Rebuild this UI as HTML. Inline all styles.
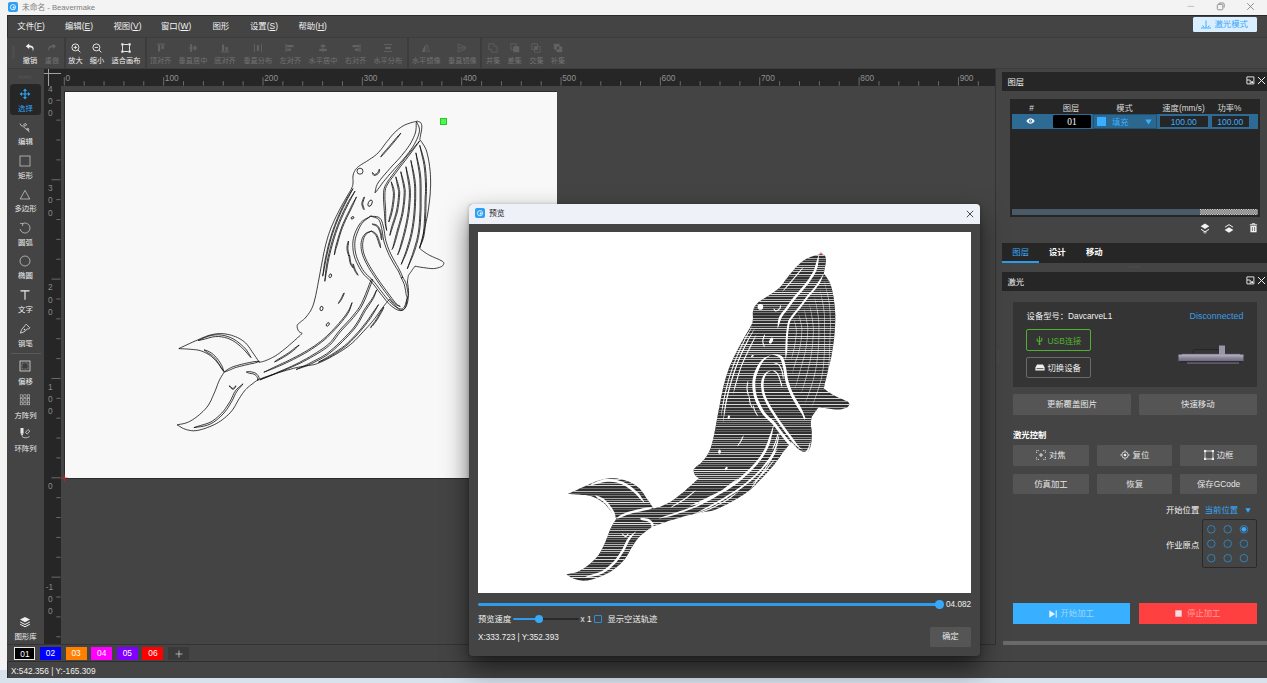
<!DOCTYPE html><html lang="zh"><head><meta charset="utf-8"><title>未命名 - Beavermake</title><style>
*{box-sizing:border-box;margin:0;padding:0}
html,body{width:1267px;height:683px;overflow:hidden;background:#f3f3f3;font-family:"Liberation Sans","Noto Sans CJK SC",sans-serif;}
.a{position:absolute}
.t{position:absolute;white-space:nowrap;line-height:1;color:#e8e8e8}
.c{text-align:center}
#win{position:absolute;left:7px;top:15px;width:1260px;height:662.600px;background:#444}
.tg{position:absolute;top:37.6px;height:30.6px;background:#464646}
.tl{position:absolute;top:57px;font-size:7.2px;line-height:8px;white-space:nowrap;text-align:center;color:#f0f0f0;transform:translateX(-50%)}
.tl.d{color:#727272}
.lt{position:absolute;left:7px;width:37px;text-align:center;font-size:7.4px;line-height:8px;color:#eee;white-space:nowrap}
.btn{position:absolute;background:#555;color:#e6e6e6;font-size:8.4px;line-height:1;display:flex;align-items:center;justify-content:center;white-space:nowrap;border-radius:1px}
svg{position:absolute;overflow:visible}
</style></head><body><div class="a" style="left:0;top:0;width:1267px;height:15px;background:#f3f3f3"></div><div class="a" style="left:8px;top:2px;width:10px;height:10px;border-radius:2px;background:#2da0f5"></div><svg style="left:8px;top:2px" width="10" height="10" viewBox="0 0 10 10"><circle cx="5" cy="5.2" r="2.6" fill="none" stroke="#d8eeff" stroke-width="1"/><circle cx="5.6" cy="5.6" r="1" fill="#fff"/></svg><div class="t" style="left:22px;top:3.5px;font-size:7.7px;color:#7c7c7c">未命名 - Beavermake</div><svg style="left:1180px;top:0" width="87" height="15" viewBox="0 0 87 15"><path d="M7.6 6.4h6.6" stroke="#b5b5b5" stroke-width="0.8" fill="none"/><rect x="37.3" y="4.4" width="5.6" height="5.4" rx="1.2" fill="none" stroke="#777" stroke-width="0.8"/><path d="M38.6 4.2c0-.8.5-1.2 1.2-1.2h3.2c.8 0 1.2.5 1.2 1.2v3.3" fill="none" stroke="#777" stroke-width="0.8"/><path d="M67.2 3.2l6.6 6.6M73.8 3.2l-6.6 6.6" stroke="#777" stroke-width="0.8" fill="none"/></svg><div class="a" style="left:0;top:677px;width:1267px;height:6px;background:#d8e2ed"></div><div class="a" style="left:0;top:0;width:7px;height:670px;background:#f3f3f3"></div><div class="a" style="left:0;top:670px;width:7px;height:13px;background:#d8e2ed"></div><div id="win"></div><div class="a" style="left:6.5px;top:14.5px;width:1261px;height:1px;background:#2a2a2a"></div><div class="a" style="left:6.5px;top:15px;width:1px;height:663px;background:#2e2e2e"></div><div class="t" style="left:17.3px;top:22.4px;font-size:8.4px;color:#f2f2f2">文件(<u>F</u>)</div><div class="t" style="left:65px;top:22.4px;font-size:8.4px;color:#f2f2f2">编辑(<u>E</u>)</div><div class="t" style="left:113.5px;top:22.4px;font-size:8.4px;color:#f2f2f2">视图(<u>V</u>)</div><div class="t" style="left:161px;top:22.4px;font-size:8.4px;color:#f2f2f2">窗口(<u>W</u>)</div><div class="t" style="left:212.5px;top:22.4px;font-size:8.4px;color:#f2f2f2">图形</div><div class="t" style="left:250px;top:22.4px;font-size:8.4px;color:#f2f2f2">设置(<u>S</u>)</div><div class="t" style="left:298.5px;top:22.4px;font-size:8.4px;color:#f2f2f2">帮助(<u>H</u>)</div><div class="a" style="left:1193.3px;top:17px;width:63.3px;height:14.6px;background:#d9eeff;border-radius:1.5px"></div><svg style="left:1200px;top:19.5px" width="12" height="9" viewBox="0 0 12 9"><path d="M6 0.5v7.3M1 8h10M2.4 5.6l1.8 1.4M9.6 5.6l-1.8 1.4" stroke="#3ba5f5" stroke-width="0.9" fill="none"/></svg><div class="t" style="left:1214.5px;top:20.4px;font-size:8.4px;color:#3ba5f5">激光模式</div><div class="a" style="left:7px;top:37px;width:1260px;height:32px;background:#3c3c3c"></div><div class="tg" style="left:7px;width:56.6px"></div><div class="tg" style="left:65.6px;width:79px"></div><div class="tg" style="left:146.6px;width:260.4px"></div><div class="tg" style="left:409px;width:71px"></div><div class="tg" style="left:482px;width:785px"></div><svg style="left:11px;top:45px" width="6" height="16" viewBox="0 0 6 16"><path d="M1 1l3 2.5-3 2.5 3 2.5-3 2.5 3 2.5M4 1l-3 2.5 3 2.5-3 2.5 3 2.5-3 2.5" stroke="#5a5a5a" stroke-width="0.5" fill="none"/></svg><svg style="left:25px;top:43px" width="10" height="9" viewBox="0 0 10 9"><path d="M4.2 0.6L0.8 3.3l3.4 2.7V4.3c2.6-.2 4 1.2 3.6 4.2 1.8-2.7.9-6-3.6-6.2z" fill="#f2f2f2"/></svg><div class="tl" style="left:30px">撤销</div><svg style="left:47px;top:43px" width="10" height="9" viewBox="0 0 10 9"><path d="M5.8 0.6L9.2 3.3 5.8 6V4.3c-2.6-.2-4 1.2-3.6 4.2-1.8-2.7-.9-6 3.6-6.2z" fill="#626262"/></svg><div class="tl d" style="left:52px">重做</div><svg style="left:70.5px;top:42.7px" width="10" height="10" viewBox="0 0 10 10"><circle cx="4.4" cy="4.4" r="3.5" fill="none" stroke="#f2f2f2" stroke-width="0.9"/><path d="M7 7l2.4 2.4M2.7 4.4h3.4M4.4 2.7v3.4" stroke="#f2f2f2" stroke-width="0.9" fill="none"/></svg><div class="tl" style="left:75.5px">放大</div><svg style="left:92px;top:42.7px" width="10" height="10" viewBox="0 0 10 10"><circle cx="4.4" cy="4.4" r="3.5" fill="none" stroke="#f2f2f2" stroke-width="0.9"/><path d="M7 7l2.4 2.4M2.7 4.4h3.4" stroke="#f2f2f2" stroke-width="0.9" fill="none"/></svg><div class="tl" style="left:97px">缩小</div><svg style="left:121px;top:42.5px" width="10" height="10" viewBox="0 0 10 10"><rect x="1.5" y="1.5" width="7" height="7" fill="none" stroke="#f2f2f2" stroke-width="0.9"/><g fill="#f2f2f2"><rect x="0.3" y="0.3" width="2.4" height="2.4"/><rect x="7.3" y="0.3" width="2.4" height="2.4"/><rect x="0.3" y="7.3" width="2.4" height="2.4"/><rect x="7.3" y="7.3" width="2.4" height="2.4"/></g><rect x="2.7" y="0" width="4.6" height="10" fill="#464646"/><rect x="0" y="2.7" width="10" height="4.6" fill="#464646"/><path d="M1.5 2.7v4.6M8.5 2.7v4.6M2.7 1.5h4.6M2.7 8.5h4.6" stroke="#f2f2f2" stroke-width="0.9"/></svg><div class="tl" style="left:126px">适合画布</div><svg style="left:155.5px;top:42.7px" width="10" height="10" viewBox="0 0 10 10"><path d="M1 1h8" stroke="#626262" stroke-width="1"/><rect x="2" y="2" width="2.2" height="6.5" fill="#626262"/><rect x="5.6" y="2" width="2.2" height="4" fill="#626262"/></svg><div class="tl d" style="left:160.5px">顶对齐</div><svg style="left:188px;top:42.7px" width="10" height="10" viewBox="0 0 10 10"><path d="M0.5 5h9" stroke="#626262" stroke-width="0.8"/><rect x="2" y="1.2" width="2.2" height="7.6" fill="#626262"/><rect x="5.8" y="2.8" width="2.2" height="4.4" fill="#626262"/></svg><div class="tl d" style="left:193px">垂直居中</div><svg style="left:220px;top:42.7px" width="10" height="10" viewBox="0 0 10 10"><path d="M1 9h8" stroke="#626262" stroke-width="1"/><rect x="2" y="1.5" width="2.2" height="6.5" fill="#626262"/><rect x="5.6" y="4" width="2.2" height="4" fill="#626262"/></svg><div class="tl d" style="left:225px">底对齐</div><svg style="left:252.8px;top:42.7px" width="10" height="10" viewBox="0 0 10 10"><path d="M1.5 1v8M8.5 1v8" stroke="#626262" stroke-width="0.9"/><rect x="3.8" y="2.2" width="2.4" height="5.6" fill="#626262"/></svg><div class="tl d" style="left:257.8px">垂直分布</div><svg style="left:285.4px;top:42.7px" width="10" height="10" viewBox="0 0 10 10"><path d="M1 1v8" stroke="#626262" stroke-width="1"/><rect x="2" y="2" width="6.5" height="2.2" fill="#626262"/><rect x="2" y="5.6" width="4" height="2.2" fill="#626262"/></svg><div class="tl d" style="left:290.4px">左对齐</div><svg style="left:318px;top:42.7px" width="10" height="10" viewBox="0 0 10 10"><path d="M5 0.5v9" stroke="#626262" stroke-width="0.8"/><rect x="2.8" y="2" width="4.4" height="2.2" fill="#626262"/><rect x="1.2" y="5.8" width="7.6" height="2.2" fill="#626262"/></svg><div class="tl d" style="left:323px">水平居中</div><svg style="left:350.5px;top:42.7px" width="10" height="10" viewBox="0 0 10 10"><path d="M9 1v8" stroke="#626262" stroke-width="1"/><rect x="1.5" y="2" width="6.5" height="2.2" fill="#626262"/><rect x="4" y="5.6" width="4" height="2.2" fill="#626262"/></svg><div class="tl d" style="left:355.5px">右对齐</div><svg style="left:382.8px;top:42.7px" width="10" height="10" viewBox="0 0 10 10"><path d="M1 1.5h8M1 8.5h8" stroke="#626262" stroke-width="0.9"/><rect x="2.2" y="3.8" width="5.6" height="2.4" fill="#626262"/></svg><div class="tl d" style="left:387.8px">水平分布</div><svg style="left:421.3px;top:42.7px" width="10" height="10" viewBox="0 0 10 10"><path d="M4.3 1v8H0.8z" fill="#626262"/><path d="M5.9 1.6v7h3z" fill="none" stroke="#626262" stroke-width="0.7"/></svg><div class="tl d" style="left:426.3px">水平镜像</div><svg style="left:457.4px;top:42.7px" width="10" height="10" viewBox="0 0 10 10"><path d="M1 4.3h8L1 0.8z" fill="none" stroke="#626262" stroke-width="0.7"/><path d="M1 5.9h8l-8 3z" fill="none" stroke="#626262" stroke-width="0.7"/></svg><div class="tl d" style="left:462.4px">垂直镜像</div><svg style="left:488.2px;top:42.7px" width="10" height="10" viewBox="0 0 10 10"><path d="M0.8 0.8h5.4v2.6h3v5.8H3.4V6.6H0.8z" fill="none" stroke="#626262" stroke-width="0.8"/></svg><div class="tl d" style="left:493.2px">并集</div><svg style="left:509.6px;top:42.7px" width="10" height="10" viewBox="0 0 10 10"><path d="M0.8 0.8h5.4v5.8H0.8z" fill="none" stroke="#626262" stroke-width="0.8"/><rect x="3.2" y="3.2" width="6" height="6" fill="#626262"/></svg><div class="tl d" style="left:514.6px">差集</div><svg style="left:531.4px;top:42.7px" width="10" height="10" viewBox="0 0 10 10"><path d="M0.8 0.8h5.8v5.8H0.8zM3.4 3.4h5.8v5.8H3.4z" fill="none" stroke="#626262" stroke-width="0.8"/><rect x="4" y="4" width="2.2" height="2.2" fill="#626262"/></svg><div class="tl d" style="left:536.4px">交集</div><svg style="left:553px;top:42.7px" width="10" height="10" viewBox="0 0 10 10"><rect x="0.8" y="0.8" width="5.8" height="5.8" fill="#626262"/><rect x="3.4" y="3.4" width="5.8" height="5.8" fill="#626262"/><rect x="3.8" y="3.8" width="2.4" height="2.4" fill="#464646"/></svg><div class="tl d" style="left:558px">补集</div><div class="a" style="left:7px;top:69px;width:37px;height:576px;background:#444"></div><svg style="left:18px;top:74.5px" width="14" height="4" viewBox="0 0 14 4"><path d="M0.5 0.5l2.5 3 2.5-3 2.5 3 2.5-3 2.5 3M0.5 3.5l2.5-3 2.5 3 2.5-3 2.5 3 2.5-3" stroke="#5a5a5a" stroke-width="0.5" fill="none"/></svg><div class="a" style="left:10px;top:84px;width:31px;height:31px;border-radius:3.5px;background:#262626"></div><svg style="left:19.3px;top:88px" width="12" height="12" viewBox="0 0 12 12"><path d="M6 0.6L3.9 3h1.5v2.4H3V3.9L0.6 6 3 8.1V6.6h2.4V9H3.9L6 11.4 8.1 9H6.6V6.6H9v1.5L11.4 6 9 3.9v1.5H6.6V3h1.5z" fill="#2ea3f2"/></svg><div class="lt" style="top:105.3px;color:#2ea3f2">选择</div><svg style="left:19.3px;top:122px" width="12" height="12" viewBox="0 0 12 12"><path d="M1 1.5l1.2 2.2M2.2 3.7c1.5.2 2.3.8 3.2 2 .8 1 1.800 1.600 3.300 1.700M8.700 7.400l1.5 2.8M4.600 2.600l2-1.2 1 1.600-2 1.200z" stroke="#e8e8e8" stroke-width="0.7" fill="none"/><circle cx="8.800" cy="7.300" r="1" fill="none" stroke="#e8e8e8" stroke-width="0.6"/></svg><div class="lt" style="top:138.2px;color:#eee">编辑</div><svg style="left:19.3px;top:154.8px" width="12" height="12" viewBox="0 0 12 12"><rect x="1" y="1" width="10" height="10" fill="none" stroke="#d4d4d4" stroke-width="0.7"/></svg><div class="lt" style="top:172px;color:#eee">矩形</div><svg style="left:19.3px;top:189px" width="12" height="12" viewBox="0 0 12 12"><path d="M6 1.3L10.8 10H1.2z" fill="none" stroke="#d4d4d4" stroke-width="0.7"/></svg><div class="lt" style="top:205.2px;color:#eee">多边形</div><svg style="left:19.3px;top:222px" width="12" height="12" viewBox="0 0 12 12"><path d="M3.2 1.900A5 5 0 1 1 1.100 7.000" fill="none" stroke="#d4d4d4" stroke-width="0.7"/><path d="M1.100 1.300l2.700 0.300-0.300 2.400" fill="none" stroke="#d4d4d4" stroke-width="0.7"/></svg><div class="lt" style="top:239px;color:#eee">圆弧</div><svg style="left:19.3px;top:255.3px" width="12" height="12" viewBox="0 0 12 12"><circle cx="6" cy="6" r="5" fill="none" stroke="#d4d4d4" stroke-width="0.7"/></svg><div class="lt" style="top:271.7px;color:#eee">椭圆</div><svg style="left:19.3px;top:288.8px" width="12" height="12" viewBox="0 0 12 12"><path d="M1.500 1.300h9v1.100h-3.950v8.400h-1.100v-8.400h-3.950z" fill="#f0f0f0"/></svg><div class="lt" style="top:306.3px;color:#eee">文字</div><svg style="left:19.3px;top:322.6px" width="12" height="12" viewBox="0 0 12 12"><path d="M7.200 1.200l3.600 3.600-1.300 1.300-0.600-0.600-3.900 3.400-3.600 1.200 1.200-3.600 3.400-3.900-0.100-0.100z" fill="none" stroke="#e8e8e8" stroke-width="0.8"/><circle cx="5.500" cy="6.500" r="0.800" fill="#e8e8e8"/></svg><div class="lt" style="top:339.5px;color:#eee">钢笔</div><div class="a" style="left:10.5px;top:352.5px;width:30px;height:0.7px;background:#5a5a5a"></div><svg style="left:19.3px;top:360px" width="12" height="12" viewBox="0 0 12 12"><rect x="1" y="1" width="10" height="10" fill="none" stroke="#e0e0e0" stroke-width="0.8"/><rect x="3" y="3" width="6" height="6" fill="#3c3c3c" stroke="#d0d0d0" stroke-width="0.5" stroke-dasharray="0.8 0.6"/></svg><div class="lt" style="top:377.7px;color:#eee">偏移</div><svg style="left:19.3px;top:394.4px" width="12" height="12" viewBox="0 0 12 12"><rect x="1.2" y="0.8" width="2.3" height="2.600" fill="none" stroke="#c4c4c4" stroke-width="0.6"/><rect x="1.2" y="4.5" width="2.3" height="2.600" fill="none" stroke="#c4c4c4" stroke-width="0.6"/><rect x="1.2" y="8.2" width="2.3" height="2.600" fill="none" stroke="#c4c4c4" stroke-width="0.6"/><rect x="4.8" y="0.8" width="2.3" height="2.600" fill="none" stroke="#c4c4c4" stroke-width="0.6"/><rect x="4.8" y="4.5" width="2.3" height="2.600" fill="none" stroke="#c4c4c4" stroke-width="0.6"/><rect x="4.8" y="8.2" width="2.3" height="2.600" fill="none" stroke="#c4c4c4" stroke-width="0.6"/><rect x="8.4" y="0.8" width="2.3" height="2.600" fill="none" stroke="#c4c4c4" stroke-width="0.6"/><rect x="8.4" y="4.5" width="2.3" height="2.600" fill="none" stroke="#c4c4c4" stroke-width="0.6"/><rect x="8.4" y="8.2" width="2.3" height="2.600" fill="none" stroke="#c4c4c4" stroke-width="0.6"/></svg><div class="lt" style="top:411.7px;color:#eee">方阵列</div><svg style="left:19.3px;top:427.3px" width="12" height="12" viewBox="0 0 12 12"><path d="M1.500 1h3v5.500h-3z" fill="#e8e8e8"/><path d="M1.500 6.500L3 9l1.500-2.500" fill="#e8e8e8"/><path d="M3 9.500c2 1.800 5 1.800 7.500 0M6.500 5.500l2.500-3 1.800 1.500-2.500 3z" stroke="#e8e8e8" stroke-width="0.7" fill="none"/></svg><div class="lt" style="top:444.5px;color:#eee">环阵列</div><svg style="left:19.3px;top:616px" width="12" height="12" viewBox="0 0 12 12"><path d="M6 1L11 3.600 6 6.200 1 3.600z" fill="#f0f0f0"/><path d="M1.200 6L6 8.500 10.800 6M1.200 8.300L6 10.800 10.800 8.300" fill="none" stroke="#f0f0f0" stroke-width="1"/></svg><div class="lt" style="top:632.7px;color:#eee">图形库</div><div class="a" style="left:44px;top:69px;width:952px;height:17px;background:#262626"></div><div class="a" style="left:44px;top:69px;width:17px;height:575.200px;background:#262626"></div><div class="a" style="left:48px;top:69px;width:0.7px;height:16.500px;background:#a0a0a0"></div><div class="a" style="left:44px;top:72.600px;width:16.500px;height:0.7px;background:#a0a0a0"></div><svg style="left:0;top:0" width="1267" height="683" viewBox="0 0 1267 683"><text x="65.50" y="81.100" font-size="8.3" fill="#909090" font-family='Liberation Sans, sans-serif'>0</text><text x="164.85" y="81.100" font-size="8.3" fill="#909090" font-family='Liberation Sans, sans-serif'>100</text><text x="264.20" y="81.100" font-size="8.3" fill="#909090" font-family='Liberation Sans, sans-serif'>200</text><text x="363.55" y="81.100" font-size="8.3" fill="#909090" font-family='Liberation Sans, sans-serif'>300</text><text x="462.90" y="81.100" font-size="8.3" fill="#909090" font-family='Liberation Sans, sans-serif'>400</text><text x="562.25" y="81.100" font-size="8.3" fill="#909090" font-family='Liberation Sans, sans-serif'>500</text><text x="661.60" y="81.100" font-size="8.3" fill="#909090" font-family='Liberation Sans, sans-serif'>600</text><text x="760.95" y="81.100" font-size="8.3" fill="#909090" font-family='Liberation Sans, sans-serif'>700</text><text x="860.30" y="81.100" font-size="8.3" fill="#909090" font-family='Liberation Sans, sans-serif'>800</text><text x="959.65" y="81.100" font-size="8.3" fill="#909090" font-family='Liberation Sans, sans-serif'>900</text><path d="M64.30 77.2V85.600M84.17 81.200V85.600M104.04 81.200V85.600M123.91 81.200V85.600M143.78 81.200V85.600M163.65 77.2V85.600M183.52 81.200V85.600M203.39 81.200V85.600M223.26 81.200V85.600M243.13 81.200V85.600M263.00 77.2V85.600M282.87 81.200V85.600M302.74 81.200V85.600M322.61 81.200V85.600M342.48 81.200V85.600M362.35 77.2V85.600M382.22 81.200V85.600M402.09 81.200V85.600M421.96 81.200V85.600M441.83 81.200V85.600M461.70 77.2V85.600M481.57 81.200V85.600M501.44 81.200V85.600M521.31 81.200V85.600M541.18 81.200V85.600M561.05 77.2V85.600M580.92 81.200V85.600M600.79 81.200V85.600M620.66 81.200V85.600M640.53 81.200V85.600M660.40 77.2V85.600M680.27 81.200V85.600M700.14 81.200V85.600M720.01 81.200V85.600M739.88 81.200V85.600M759.75 77.2V85.600M779.62 81.200V85.600M799.49 81.200V85.600M819.36 81.200V85.600M839.23 81.200V85.600M859.10 77.2V85.600M878.97 81.200V85.600M898.84 81.200V85.600M918.71 81.200V85.600M938.58 81.200V85.600M958.45 77.2V85.600M978.32 81.200V85.600M56.300 100.27H60.500M56.300 120.14H60.500M56.300 140.01H60.500M56.300 159.88H60.500M51.500 179.75H60.500M56.300 199.62H60.500M56.300 219.49H60.500M56.300 239.36H60.500M56.300 259.23H60.500M51.500 279.10H60.500M56.300 298.97H60.500M56.300 318.84H60.500M56.300 338.71H60.500M56.300 358.58H60.500M51.500 378.45H60.500M56.300 398.32H60.500M56.300 418.19H60.500M56.300 438.06H60.500M56.300 457.93H60.500M51.500 477.80H60.500M56.300 497.67H60.500M56.300 517.54H60.500M56.300 537.41H60.500M56.300 557.28H60.500M51.500 577.15H60.500M56.300 597.02H60.500M56.300 616.89H60.500M56.300 636.76H60.500" stroke="#9a9a9a" stroke-width="0.6" fill="none"/><text x="50.2" y="91.60" font-size="8.3" fill="#8a8a8a" text-anchor="middle" font-family="Liberation Sans, sans-serif">4</text><text x="50.2" y="103.90" font-size="8.3" fill="#8a8a8a" text-anchor="middle" font-family="Liberation Sans, sans-serif">0</text><text x="50.2" y="116.20" font-size="8.3" fill="#8a8a8a" text-anchor="middle" font-family="Liberation Sans, sans-serif">0</text><text x="50.2" y="190.95" font-size="8.3" fill="#8a8a8a" text-anchor="middle" font-family="Liberation Sans, sans-serif">3</text><text x="50.2" y="203.25" font-size="8.3" fill="#8a8a8a" text-anchor="middle" font-family="Liberation Sans, sans-serif">0</text><text x="50.2" y="215.55" font-size="8.3" fill="#8a8a8a" text-anchor="middle" font-family="Liberation Sans, sans-serif">0</text><text x="50.2" y="290.30" font-size="8.3" fill="#8a8a8a" text-anchor="middle" font-family="Liberation Sans, sans-serif">2</text><text x="50.2" y="302.60" font-size="8.3" fill="#8a8a8a" text-anchor="middle" font-family="Liberation Sans, sans-serif">0</text><text x="50.2" y="314.90" font-size="8.3" fill="#8a8a8a" text-anchor="middle" font-family="Liberation Sans, sans-serif">0</text><text x="50.2" y="389.65" font-size="8.3" fill="#8a8a8a" text-anchor="middle" font-family="Liberation Sans, sans-serif">1</text><text x="50.2" y="401.95" font-size="8.3" fill="#8a8a8a" text-anchor="middle" font-family="Liberation Sans, sans-serif">0</text><text x="50.2" y="414.25" font-size="8.3" fill="#8a8a8a" text-anchor="middle" font-family="Liberation Sans, sans-serif">0</text><text x="50.2" y="489.00" font-size="8.3" fill="#8a8a8a" text-anchor="middle" font-family="Liberation Sans, sans-serif">0</text><text x="49.5" y="589.85" font-size="8.3" fill="#8a8a8a" text-anchor="middle" font-family="Liberation Sans, sans-serif">-1</text><text x="50.2" y="602.15" font-size="8.3" fill="#8a8a8a" text-anchor="middle" font-family="Liberation Sans, sans-serif">0</text><text x="50.2" y="614.45" font-size="8.3" fill="#8a8a8a" text-anchor="middle" font-family="Liberation Sans, sans-serif">0</text></svg><div class="a" style="left:64.300px;top:91.300px;width:493px;height:387.500px;background:#2b2b2b"></div><div class="a" style="left:65px;top:92px;width:491.500px;height:386px;background:#f8f8f8"></div><svg style="left:60px;top:474px" width="9" height="9" viewBox="0 0 9 9"><path d="M4.300 0.500v7M0.800 4h7" stroke="#e02020" stroke-width="0.7"/></svg><div class="a" style="left:440px;top:117.800px;width:7px;height:7.200px;background:#4cf94c;border:0.8px solid #2cc42c"></div><svg style="left:0;top:0" width="1267" height="683" viewBox="0 0 1267 683"><g fill="none" stroke="#0a0a0a" stroke-width="0.78" stroke-linejoin="round"><path d="M417.5,121.2L418.1 121.5 418.8 121.7 419.4 121.9 420.0 122.2 420.6 122.5 421.0 123.0 421.3 123.6 421.5 124.4 421.7 125.2 421.8 126.1 421.8 127.1 421.8 128.0 421.7 128.9 421.6 129.9 421.4 131.0 421.2 132.0 421.0 133.0 420.8 134.0 420.6 134.9 420.5 135.9 420.3 136.8 420.1 137.7 420.0 138.6 419.8 139.5 420.3 140.2 420.9 140.9 421.4 141.6 421.9 142.3 422.4 143.1 423.0 144.0 423.6 145.0 424.2 145.9 424.8 147.0 425.4 148.1 426.0 149.5 426.5 151.0 427.0 152.8 427.5 154.8 428.0 156.9 428.5 159.2 428.9 161.6 429.3 164.0 429.6 166.5 429.9 169.0 430.2 171.7 430.4 174.4 430.5 177.2 430.6 180.0 430.6 182.9 430.6 185.9 430.4 188.9 430.3 191.9 430.1 195.0 429.8 198.0 429.5 201.0 429.1 204.0 428.7 207.1 428.3 210.1 427.8 213.1 427.3 216.0 426.7 218.9 426.1 221.8 425.5 224.7 424.8 227.5 424.1 230.3 423.5 233.0 422.9 235.7 422.2 238.3 421.6 240.8 421.0 243.4 420.3 245.9 419.7 248.5 420.6 249.2 421.4 249.9 422.3 250.5 423.2 251.2 424.1 251.9 425.0 252.5 425.9 253.1 426.8 253.7 427.7 254.2 428.7 254.8 429.8 255.4 431.0 256.0 432.5 256.7 434.3 257.5 436.2 258.3 438.1 259.1 439.7 259.8 441.0 260.5 441.9 261.0 442.7 261.5 443.2 261.9 443.5 262.3 443.7 262.7 443.8 263.2 443.8 263.7 443.6 264.3 443.3 264.9 442.9 265.5 442.3 266.0 441.5 266.5 440.5 267.0 439.4 267.4 438.0 267.8 436.6 268.2 435.1 268.4 433.6 268.6 432.0 268.6 430.3 268.5 428.6 268.3 426.8 268.1 425.1 267.8 423.5 267.6 422.0 267.4 420.5 267.2 419.1 266.9 417.8 266.7 416.4 266.4 415.0 266.2 414.4 267.0 413.8 267.8 413.2 268.6 412.6 269.4 412.1 270.2 411.5 271.0 411.0 271.8 410.4 272.5 409.9 273.3 409.4 274.0 408.9 274.8 408.4 275.5 408.2 276.6 408.0 277.6 407.8 278.6 407.7 279.7 407.5 280.8 407.5 282.0 407.6 283.3 407.8 284.6 408.0 286.0 408.2 287.5 408.4 289.0 408.5 290.5 408.5 292.1 408.5 293.8 408.4 295.6 408.3 297.3 408.1 299.0 407.9 300.5 407.6 301.9 407.3 303.2 406.9 304.5 406.5 305.6 406.0 306.6 405.5 307.5 404.9 308.3 404.2 308.9 403.4 309.5 402.6 309.9 401.8 310.1 401.0 310.2 400.3 310.1 399.6 309.7 398.9 309.3 398.2 308.6 397.4 307.9 396.5 307.0 395.5 306.0 394.4 304.7 393.2 303.4 391.9 302.0 390.7 300.6 389.5 299.2 388.5 300.4 387.5 301.5 386.6 302.6 385.6 303.8 384.5 305.2 383.2 306.8 381.7 308.8 380.1 311.0 378.4 313.5 376.6 316.0 374.8 318.4 373.1 320.6 371.4 322.6 369.8 324.5 368.2 326.3 366.5 328.1 364.8 330.0 363.0 331.9 361.1 334.0 359.1 336.1 357.1 338.3 355.0 340.4 352.8 342.5 350.5 344.5 348.2 346.3 345.7 348.1 343.2 349.8 340.6 351.4 338.0 353.0 335.3 354.6 332.4 356.2 329.4 357.9 326.2 359.5 323.2 361.0 320.3 362.3 317.7 363.4 315.5 364.2 313.5 364.7 311.8 365.0 310.1 365.3 308.4 365.5 306.7 365.8 305.0 366.1 303.5 366.3 301.9 366.5 300.3 366.8 298.4 367.2 296.1 367.7 293.3 368.4 290.2 369.3 286.7 370.2 283.2 371.3 279.7 372.3 276.4 373.3 273.3 374.3 270.2 375.3 267.2 376.4 264.2 377.4 261.2 378.5 258.2 379.5 257.4 380.1 256.6 380.7 255.8 381.2 255.0 381.8 254.1 382.5 253.1 383.3 252.0 384.2 250.7 385.1 249.4 386.1 248.1 387.2 246.8 388.4 245.6 389.6 244.5 390.9 243.5 392.2 242.5 393.6 241.5 395.1 240.4 396.7 239.3 398.4 238.2 400.3 237.0 402.4 235.8 404.6 234.6 406.8 233.2 409.0 231.7 411.0 230.0 412.9 228.3 414.7 226.4 416.4 224.4 418.1 222.4 419.7 220.4 421.1 218.4 422.4 216.3 423.6 214.2 424.7 212.0 425.7 209.9 426.6 207.8 427.4 205.7 428.2 203.5 428.9 201.3 429.5 199.2 430.1 197.2 430.5 195.2 430.7 193.3 430.8 191.6 430.7 189.9 430.4 188.2 430.1 186.6 429.7 185.1 429.2 183.6 428.6 182.3 428.0 181.0 427.2 179.7 426.4 178.4 425.6 177.1 424.9 178.9 424.5 180.6 424.2 182.4 423.9 184.1 423.5 185.9 423.0 187.6 422.4 189.3 421.6 191.0 420.7 192.7 419.7 194.3 418.6 196.0 417.4 197.7 416.1 199.4 414.7 201.2 413.1 203.0 411.4 204.7 409.7 206.3 407.9 207.8 406.0 209.1 404.0 210.2 402.0 211.3 399.9 212.2 397.7 213.2 395.5 214.1 393.4 215.0 391.3 215.9 389.1 216.7 386.9 217.5 384.7 218.3 382.7 219.1 380.8 219.9 379.1 220.8 377.6 221.6 376.2 222.5 374.8 223.3 373.4 224.2 372.0 223.2 370.5 222.1 369.0 221.1 367.5 220.1 366.0 219.0 364.6 217.9 363.2 216.7 361.8 215.6 360.5 214.3 359.2 213.1 357.9 211.7 356.7 210.3 355.6 208.8 354.6 207.1 353.6 205.4 352.7 203.7 351.9 201.9 351.2 200.2 350.6 198.5 350.2 196.9 349.9 195.3 349.7 193.6 349.6 191.9 349.4 190.2 349.3 188.4 349.1 186.5 349.0 184.6 348.9 182.7 348.8 180.7 348.7 178.8 348.6 181.5 347.3 184.3 346.0 187.1 344.7 189.8 343.4 192.5 342.2 195.2 341.0 197.8 339.9 200.4 338.7 203.0 337.6 205.5 336.6 207.9 335.7 210.3 335.0 212.5 334.5 214.7 334.1 216.8 333.8 218.8 333.6 220.8 333.6 222.9 333.7 225.0 333.9 227.2 334.3 229.4 334.7 231.5 335.3 233.5 336.0 235.5 336.7 237.4 337.5 239.1 338.4 240.9 339.4 242.5 340.5 244.1 341.7 245.6 343.0 247.0 344.5 248.3 346.1 249.6 347.9 250.8 349.7 251.9 351.4 253.1 353.1 254.2 354.7 255.3 356.3 256.3 357.8 257.3 359.3 258.4 360.9 259.4 362.4 260.4 362.1 261.4 361.9 262.3 361.7 263.3 361.4 264.4 361.1 265.7 360.6 267.2 360.0 268.8 359.3 270.5 358.5 272.3 357.6 274.1 356.6 275.8 355.6 277.5 354.5 279.2 353.3 280.9 352.0 282.5 350.7 284.2 349.4 285.9 348.0 287.6 346.6 289.4 345.0 291.2 343.5 292.9 342.0 294.5 340.5 296.0 339.2 297.3 338.1 298.4 337.0 299.3 336.1 300.3 335.2 301.2 334.3 302.2 333.4 301.6 333.0 300.9 332.7 300.2 332.3 299.6 332.0 299.0 331.5 298.5 330.9 298.1 330.1 297.7 329.2 297.4 328.2 297.2 327.2 297.1 326.3 297.2 325.4 297.5 324.7 298.1 324.0 298.8 323.4 299.5 322.8 300.3 322.2 301.0 321.6 301.6 321.1 302.3 320.6 302.9 320.2 303.6 319.6 304.3 319.0 305.1 318.1 306.1 317.0 307.1 315.7 308.3 314.2 309.4 312.6 310.5 311.0 311.4 309.3 312.2 307.6 312.9 305.8 313.5 304.0 314.1 302.1 314.6 300.0 315.2 297.9 315.7 295.6 316.2 293.2 316.7 290.7 317.2 288.2 317.7 285.5 318.2 282.8 318.7 280.0 319.3 277.1 319.8 274.1 320.4 271.1 320.9 268.1 321.5 265.2 322.0 262.3 322.6 259.5 323.1 256.7 323.6 253.9 324.2 251.2 324.8 248.5 325.4 245.9 326.1 243.3 326.8 240.7 327.5 238.2 328.2 235.8 329.0 233.4 329.8 231.2 330.6 229.0 331.4 226.9 332.3 224.9 333.2 222.9 334.1 220.8 335.1 218.7 336.1 216.6 337.2 214.4 338.3 212.3 339.3 210.2 340.4 208.2 341.5 206.2 342.5 204.2 343.6 202.3 344.7 200.4 345.7 198.6 346.7 196.9 347.7 195.2 348.6 193.6 349.5 192.1 350.4 190.7 351.1 189.3 351.7 188.1 352.1 187.1 352.5 186.2 352.7 185.4 352.8 184.7 352.9 183.9 353.0 183.0 353.1 181.9 353.0 180.8 353.0 179.5 352.9 178.3 352.9 177.1 353.0 176.0 353.2 175.0 353.4 174.0 353.7 173.1 354.1 172.2 354.5 171.3 355.0 170.5 355.5 169.7 356.1 168.9 356.7 168.2 357.4 167.5 358.3 166.7 359.3 165.9 360.5 165.1 361.9 164.2 363.3 163.3 364.9 162.4 366.5 161.4 368.1 160.4 369.7 159.3 371.4 158.2 373.2 157.0 374.9 155.7 376.6 154.3 378.2 152.8 379.7 151.1 381.2 149.3 382.7 147.3 384.1 145.3 385.5 143.4 387.0 141.5 388.5 139.7 389.9 137.9 391.4 136.1 392.9 134.4 394.3 132.8 395.8 131.4 397.3 130.1 398.7 128.9 400.2 127.8 401.7 126.8 403.1 125.9 404.6 125.1 406.1 124.4 407.7 123.8 409.3 123.3 410.8 122.8 412.2 122.4 413.4 122.1 414.4 121.8 415.1 121.6 415.7 121.5 416.3 121.4 416.9 121.3Z"/><path d="M416.4,121.6L416.2 123.6 416.2 125.6 416.2 127.4 416.0 129.2 415.8 131.0 415.3 133.1 414.5 135.3 413.5 137.7 412.3 140.2 411.0 142.7 409.5 145.2 407.7 147.7 405.8 150.4 403.7 153.0 401.6 155.6 399.4 158.2 397.0 160.8 394.6 163.4 392.1 166.0 389.7 168.7 387.4 171.4 385.0 174.1 382.6 176.9 380.5 179.5 378.6 182.0 377.2 184.4 376.3 186.6 375.8 188.6 375.4 190.7 375.0 192.8 375.0 192.8 376.5 191.2 377.7 189.5 379.0 187.9 380.2 186.2 381.6 184.2 383.4 181.8 385.5 179.3 387.8 176.5 390.1 173.8 392.5 171.1 394.8 168.5 397.3 165.9 399.7 163.3 402.1 160.7 404.4 158.0 406.6 155.3 408.7 152.6 410.7 149.9 412.6 147.2 414.2 144.5 415.6 141.9 416.9 139.2 418.0 136.6 418.8 134.1 419.4 131.6 419.5 129.2 419.0 127.0 418.2 125.1 417.3 123.4 416.4 121.6ZM419.8,140.7L417.3 143.6 414.9 146.4 412.5 149.3 410.0 152.3 407.5 155.4 404.8 158.7 402.1 162.3 399.3 165.9 396.6 169.4 394.2 172.6 392.1 175.5 390.0 178.2 388.1 180.8 386.5 183.4 385.2 185.8 384.3 188.1 383.8 190.2 383.6 192.3 383.5 194.4 383.5 196.7 383.5 199.3 383.7 202.2 383.9 205.2 384.1 208.1 384.3 210.8 384.5 213.5 384.6 216.2 384.8 218.9 385.0 221.3 385.2 223.4 385.5 225.2 385.8 226.6 386.1 227.9 386.4 229.1 386.7 230.4 386.7 230.4 386.5 229.1 386.3 227.8 386.1 226.6 385.9 225.1 385.8 223.4 385.7 221.2 385.7 218.8 385.7 216.2 385.7 213.5 385.7 210.8 385.5 208.0 385.3 205.0 385.1 202.1 384.9 199.3 384.9 196.7 384.9 194.4 385.0 192.4 385.2 190.5 385.6 188.5 386.4 186.4 387.7 184.1 389.2 181.6 391.1 179.1 393.2 176.3 395.4 173.4 397.8 170.2 400.4 166.7 403.2 163.2 405.9 159.6 408.5 156.2 410.9 153.0 413.2 149.9 415.4 146.8 417.6 143.8 419.8 140.7ZM400.8,133.2L398.5 135.4 396.5 137.7 394.4 140.2 392.4 142.6 390.4 145.0 388.4 147.3 386.4 149.6 384.4 151.9 382.4 154.3 380.7 156.9 380.7 156.9 383.0 154.8 385.0 152.5 387.1 150.2 389.1 147.9 391.1 145.6 393.1 143.2 395.1 140.8 397.1 138.3 399.1 135.8 400.8 133.2ZM355.0,191.1L353.4 193.6 351.8 196.1 350.2 198.6 348.6 201.3 347.0 204.2 345.4 207.5 343.7 210.9 342.1 214.5 340.4 218.2 338.9 221.9 337.5 225.6 336.1 229.3 334.8 233.1 333.5 237.0 332.3 240.8 331.2 244.8 330.1 248.8 329.1 252.9 328.1 257.0 327.3 261.0 326.6 265.1 326.0 269.1 325.5 273.2 325.2 277.2 324.8 281.3 324.8 281.3 325.5 277.3 326.2 273.3 326.9 269.3 327.5 265.2 328.3 261.2 329.1 257.2 330.1 253.1 331.1 249.1 332.2 245.1 333.3 241.1 334.5 237.3 335.7 233.4 337.0 229.7 338.4 225.9 339.8 222.3 341.4 218.6 343.0 214.9 344.6 211.4 346.3 207.9 347.9 204.7 349.4 201.7 350.8 199.0 352.2 196.4 353.6 193.8 355.0 191.1ZM356.5,196.9L355.0 199.5 353.5 202.2 352.1 204.8 350.7 207.6 349.3 210.6 347.8 213.6 346.2 216.8 344.7 220.1 343.1 223.5 341.7 227.0 340.4 230.8 339.1 234.9 337.9 238.9 336.8 242.7 335.9 245.9 335.4 248.3 335.0 250.2 334.8 251.8 334.6 253.2 334.3 254.8 334.3 254.8 334.8 253.3 335.1 251.8 335.5 250.3 336.0 248.5 336.8 246.1 337.7 243.0 338.7 239.2 339.9 235.1 341.2 231.0 342.6 227.3 344.0 223.8 345.5 220.5 347.0 217.2 348.6 214.0 350.1 211.0 351.5 208.0 352.9 205.2 354.1 202.5 355.3 199.7 356.5 196.9ZM419.7,145.3L420.6 149.3 421.5 153.2 422.4 157.2 423.3 161.1 424.0 165.1 424.5 169.1 424.9 173.3 425.2 177.4 425.4 181.3 425.5 185.0 425.5 188.3 425.5 191.3 425.4 194.2 425.2 197.1 425.1 200.0 425.0 202.9 425.0 205.7 424.9 208.6 424.9 211.6 424.7 215.0 424.5 218.8 424.3 223.1 424.0 227.5 423.6 231.7 423.2 235.3 422.6 238.3 421.9 240.8 421.1 243.1 420.3 245.3 419.6 247.7 419.6 247.7 420.5 245.4 421.5 243.2 422.4 241.0 423.3 238.5 424.0 235.5 424.6 231.8 425.0 227.6 425.3 223.2 425.5 218.9 425.7 215.0 425.9 211.7 425.9 208.6 426.0 205.7 426.0 202.9 426.1 200.0 426.2 197.1 426.4 194.3 426.5 191.4 426.5 188.3 426.5 185.0 426.4 181.3 426.2 177.3 425.9 173.2 425.5 169.0 425.0 164.9 424.2 160.9 423.2 157.0 422.1 153.1 420.9 149.2 419.7 145.3ZM415.9,152.8L416.6 157.3 417.4 161.8 418.2 166.4 418.9 170.8 419.5 175.1 419.9 179.2 420.0 183.2 420.1 187.1 420.1 191.0 420.1 195.0 420.1 199.0 420.1 203.1 420.1 207.1 420.0 211.1 419.8 215.0 419.6 218.8 419.4 222.6 419.1 226.3 418.7 230.0 418.1 233.6 417.4 237.2 416.6 240.7 415.6 244.1 414.6 247.6 413.5 251.0 412.4 254.6 411.1 258.1 409.8 261.7 408.5 265.2 407.3 268.8 407.3 268.8 408.8 265.3 410.3 261.9 411.8 258.4 413.2 254.9 414.5 251.4 415.6 247.9 416.6 244.4 417.6 240.9 418.4 237.4 419.1 233.8 419.6 230.1 420.1 226.4 420.4 222.7 420.6 218.9 420.8 215.0 421.0 211.1 421.1 207.1 421.1 203.1 421.1 199.0 421.1 195.0 421.1 191.0 421.1 187.1 421.0 183.1 420.9 179.1 420.5 174.9 419.9 170.6 419.0 166.2 418.0 161.7 416.9 157.2 415.9 152.8ZM410.9,160.4L411.5 164.4 412.2 168.5 412.9 172.6 413.5 176.5 414.0 180.1 414.4 183.3 414.6 186.1 414.7 188.9 414.7 191.8 414.7 195.0 414.7 198.7 414.5 202.7 414.4 206.8 414.1 211.0 413.8 215.0 413.4 218.8 412.9 222.6 412.4 226.3 411.7 230.0 411.0 233.6 410.2 237.2 409.2 240.9 408.1 244.4 407.1 247.8 406.1 251.1 405.1 254.0 404.1 256.7 403.1 259.2 402.2 261.8 401.2 264.4 401.2 264.4 402.4 261.9 403.5 259.4 404.7 256.9 405.8 254.3 406.9 251.3 408.0 248.1 409.1 244.7 410.2 241.1 411.1 237.5 412.0 233.8 412.7 230.1 413.4 226.4 413.9 222.7 414.4 218.9 414.8 215.0 415.1 211.0 415.4 206.9 415.5 202.7 415.7 198.7 415.7 195.0 415.7 191.8 415.7 188.8 415.6 186.1 415.3 183.2 415.0 179.9 414.4 176.3 413.7 172.4 412.8 168.4 411.8 164.4 410.9 160.4ZM405.9,166.7L406.4 170.1 406.9 173.5 407.5 176.9 408.0 180.1 408.5 183.1 408.9 185.6 409.1 187.8 409.3 189.9 409.4 192.2 409.4 195.0 409.3 198.3 409.0 202.1 408.7 206.1 408.3 210.1 407.8 213.9 407.2 217.6 406.6 221.2 405.8 224.8 405.0 228.4 404.2 231.8 403.4 235.2 402.4 238.7 401.5 242.0 400.7 245.0 400.0 247.6 399.4 249.6 399.0 251.1 398.5 252.3 398.1 253.5 397.7 254.8 397.7 254.8 398.3 253.5 398.8 252.4 399.3 251.2 399.9 249.8 400.6 247.8 401.5 245.3 402.4 242.2 403.4 238.9 404.3 235.5 405.2 232.0 406.0 228.6 406.8 225.0 407.5 221.4 408.2 217.8 408.8 214.1 409.3 210.2 409.7 206.2 410.0 202.2 410.3 198.4 410.4 195.0 410.4 192.2 410.3 189.9 410.1 187.7 409.9 185.5 409.5 182.9 409.0 179.9 408.3 176.7 407.5 173.4 406.7 170.0 405.9 166.7ZM400.8,171.7L401.3 174.7 401.9 177.7 402.5 180.8 403.1 183.6 403.5 186.1 403.8 188.1 404.1 189.6 404.2 191.0 404.2 192.7 404.1 195.0 403.9 198.0 403.6 201.5 403.2 205.4 402.6 209.2 402.0 212.9 401.3 216.4 400.3 219.8 399.4 223.2 398.4 226.6 397.4 230.0 396.5 233.4 395.5 237.0 394.6 240.5 393.9 243.5 393.3 245.9 392.9 247.5 392.6 248.3 392.4 248.7 392.1 249.0 391.9 249.5 391.9 249.5 392.2 249.0 392.4 248.7 392.7 248.3 393.1 247.5 393.7 246.1 394.5 243.7 395.5 240.7 396.5 237.3 397.4 233.7 398.4 230.2 399.3 226.9 400.3 223.5 401.3 220.1 402.2 216.6 403.0 213.1 403.6 209.4 404.1 205.5 404.6 201.6 404.9 198.1 405.1 195.0 405.2 192.7 405.2 191.0 405.1 189.5 404.8 187.9 404.5 185.9 404.0 183.4 403.3 180.6 402.5 177.6 401.6 174.6 400.8 171.7ZM395.8,176.8L396.2 179.1 396.7 181.6 397.1 183.9 397.6 186.1 398.0 188.1 398.3 189.6 398.5 190.7 398.7 191.8 398.7 193.1 398.6 195.0 398.4 197.6 398.1 200.7 397.7 204.1 397.1 207.6 396.5 210.9 395.7 214.1 394.7 217.4 393.6 220.7 392.6 223.8 391.7 226.5 391.2 228.7 390.7 230.5 390.4 232.1 390.1 233.7 389.8 235.4 389.8 235.4 390.4 233.8 390.9 232.3 391.4 230.7 392.0 228.9 392.7 226.7 393.5 224.1 394.6 221.0 395.6 217.7 396.7 214.4 397.5 211.1 398.1 207.8 398.7 204.3 399.1 200.8 399.4 197.7 399.6 195.0 399.7 193.1 399.7 191.7 399.5 190.6 399.3 189.4 399.0 187.9 398.6 185.9 398.0 183.7 397.3 181.4 396.5 179.1 395.8 176.8ZM391.3,181.8L391.6 183.5 391.9 185.2 392.3 186.9 392.7 188.5 393.0 190.1 393.2 191.4 393.4 192.6 393.4 193.8 393.4 195.2 393.3 197.0 393.1 199.2 392.8 201.8 392.4 204.5 392.0 207.3 391.5 209.9 391.0 212.3 390.3 214.7 389.7 217.1 389.2 219.5 388.8 222.0 388.8 222.0 389.7 219.7 390.6 217.4 391.3 215.0 391.9 212.6 392.5 210.1 393.0 207.5 393.4 204.7 393.8 201.9 394.1 199.3 394.3 197.0 394.4 195.3 394.4 193.8 394.4 192.6 394.2 191.3 394.0 189.9 393.7 188.3 393.2 186.7 392.6 185.0 391.9 183.4 391.3 181.8ZM370.8,216.1L368.7 217.3 366.7 218.3 364.6 219.5 362.6 220.9 360.7 222.7 359.0 225.0 357.5 227.6 356.1 230.5 354.9 233.3 354.0 236.0 353.4 238.5 353.0 240.9 352.8 243.2 352.8 245.5 352.9 247.8 353.1 250.1 353.4 252.4 353.9 254.7 354.6 257.1 355.4 259.5 356.5 262.2 357.9 265.0 359.4 267.8 361.0 270.5 362.6 272.9 364.3 275.0 366.1 276.8 367.9 278.4 369.7 280.0 371.4 281.8 373.1 283.9 374.9 286.1 376.6 288.4 378.4 290.8 380.2 293.2 382.1 295.5 384.0 298.0 386.0 300.5 388.0 302.7 389.9 304.7 391.9 306.4 393.8 307.8 395.7 309.0 397.5 309.9 399.2 310.4 400.7 310.6 402.1 310.4 403.3 309.9 404.3 309.0 405.2 307.8 405.9 306.2 406.3 304.3 406.7 302.1 407.0 299.9 407.3 297.8 407.3 297.8 406.7 299.8 406.1 302.0 405.5 304.1 404.9 305.8 404.2 307.2 403.4 308.0 402.6 308.6 401.7 308.9 400.8 309.0 399.6 308.7 398.3 308.2 396.7 307.3 394.9 306.2 393.1 304.8 391.3 303.2 389.5 301.4 387.6 299.2 385.6 296.8 383.6 294.3 381.8 291.9 379.9 289.6 378.2 287.2 376.5 284.9 374.7 282.6 372.9 280.5 371.1 278.5 369.2 276.9 367.5 275.3 365.8 273.7 364.2 271.7 362.6 269.4 361.1 266.8 359.7 264.1 358.4 261.3 357.3 258.8 356.5 256.4 355.9 254.2 355.4 252.0 355.1 249.9 354.9 247.7 354.8 245.4 354.8 243.3 355.0 241.1 355.3 238.9 355.9 236.6 356.8 234.0 357.9 231.2 359.1 228.4 360.4 225.8 361.8 223.6 363.4 221.7 365.1 220.2 367.0 218.9 368.9 217.5 370.8 216.1ZM370.8,216.1L372.5 216.7 374.3 217.2 376.0 217.8 377.5 218.4 378.6 219.3 379.4 220.6 380.1 222.3 380.7 224.2 381.2 226.4 381.7 228.6 382.2 231.0 382.6 233.5 382.9 236.2 383.4 239.0 384.0 241.8 384.9 244.6 385.8 247.3 386.9 250.0 388.1 252.8 389.4 255.7 391.0 258.8 392.9 262.2 394.8 265.5 396.6 268.5 398.2 270.9 399.2 272.9 399.8 274.3 400.3 275.5 400.8 276.6 401.3 277.9 402.8 277.3 402.2 276.0 401.8 274.9 401.3 273.7 400.6 272.2 399.6 270.2 398.3 267.5 396.5 264.5 394.6 261.2 392.8 257.9 391.2 254.8 389.9 252.0 388.7 249.3 387.7 246.6 386.8 243.9 386.0 241.3 385.4 238.7 384.9 235.9 384.6 233.3 384.2 230.6 383.7 228.2 383.2 225.9 382.6 223.7 382.0 221.6 381.1 219.7 379.8 218.1 378.2 217.1 376.4 216.6 374.5 216.4 372.6 216.3 370.8 216.1ZM401.3,278.0L402.0 279.3 402.6 280.6 403.2 281.9 403.8 283.2 404.3 284.6 404.7 286.3 405.1 288.2 405.5 290.2 405.8 292.0 406.0 293.6 406.2 294.7 406.4 295.6 406.7 296.3 407.0 297.0 407.3 297.8 407.3 297.8 407.6 297.0 407.8 296.3 408.0 295.5 408.1 294.5 408.0 293.3 407.7 291.7 407.4 289.8 407.1 287.8 406.7 285.8 406.2 284.0 405.6 282.4 405.0 281.0 404.2 279.7 403.4 278.5 402.8 277.2ZM371.3,231.0L370.0 231.6 368.6 232.0 367.2 232.5 365.9 233.2 364.8 234.2 363.8 235.5 362.9 237.0 362.1 238.7 361.6 240.5 361.2 242.4 361.0 244.4 361.1 246.5 361.2 248.7 361.6 250.9 362.1 253.2 362.8 255.5 363.6 257.7 364.7 260.0 365.8 262.4 367.1 264.8 368.5 267.3 370.1 270.0 371.8 272.7 373.6 275.4 375.4 278.0 377.2 280.7 379.0 283.4 380.9 286.0 382.8 288.7 384.7 291.3 386.7 293.9 388.8 296.7 390.9 299.3 392.9 301.6 394.7 303.4 396.1 304.6 397.3 305.3 398.3 305.8 399.3 306.1 400.3 306.6 400.3 306.6 399.4 306.0 398.5 305.5 397.6 304.9 396.6 304.1 395.4 302.8 393.8 300.8 392.0 298.4 390.0 295.7 388.0 293.0 386.0 290.3 384.1 287.7 382.2 285.1 380.3 282.5 378.5 279.8 376.7 277.2 374.9 274.5 373.2 271.8 371.5 269.1 369.9 266.5 368.5 264.0 367.2 261.6 366.1 259.3 365.1 257.1 364.3 254.9 363.6 252.8 363.2 250.6 362.8 248.5 362.7 246.4 362.6 244.4 362.8 242.6 363.1 240.8 363.5 239.1 364.1 237.5 364.8 236.1 365.5 234.9 366.4 233.9 367.5 233.1 368.8 232.4 370.1 231.8 371.3 231.0ZM371.3,231.0L372.2 231.9 373.1 232.6 374.0 233.3 374.9 234.0 375.6 234.8 376.3 236.0 376.9 237.3 377.4 238.8 377.9 240.3 378.4 241.7 378.8 243.0 379.2 244.2 379.5 245.4 380.0 246.6 380.6 247.7 380.6 247.7 380.5 246.4 380.4 245.2 380.1 244.0 379.8 242.7 379.3 241.4 378.9 240.0 378.4 238.5 377.8 237.0 377.2 235.5 376.5 234.3 375.6 233.3 374.6 232.5 373.5 231.9 372.4 231.5 371.3 231.0ZM372.2,224.0L373.2 224.6 374.3 225.1 375.3 225.5 376.3 225.9 377.1 226.6 377.9 227.6 378.6 228.8 379.2 230.1 379.7 231.5 380.2 232.9 380.5 234.2 380.7 235.6 380.9 237.0 381.2 238.4 381.7 239.8 381.7 239.8 381.8 238.4 381.8 236.9 381.6 235.5 381.4 234.1 381.0 232.7 380.6 231.2 380.0 229.8 379.4 228.4 378.6 227.1 377.8 226.0 376.8 225.2 375.7 224.6 374.5 224.3 373.3 224.2 372.2 224.0ZM224.2,372.0L226.3 371.4 228.4 370.6 230.4 369.7 232.4 368.8 234.5 367.9 236.8 367.2 239.3 366.5 241.9 365.9 244.4 365.3 247.0 364.7 249.5 364.1 252.0 363.6 254.5 363.1 257.0 362.3 259.4 361.4 259.4 361.4 256.8 361.4 254.2 361.6 251.7 362.1 249.2 362.6 246.7 363.1 244.1 363.7 241.5 364.3 238.9 365.0 236.4 365.7 234.0 366.4 231.7 367.3 229.7 368.3 227.8 369.4 226.0 370.6 224.2 372.0ZM204.0,349.8L205.6 351.2 207.3 352.5 209.1 353.5 210.8 354.6 212.3 355.7 213.7 357.0 215.0 358.4 216.2 359.9 217.4 361.5 218.4 363.1 219.4 364.7 220.3 366.4 221.3 368.1 222.4 369.7 223.7 371.2 223.7 371.2 223.2 369.3 222.6 367.4 221.8 365.6 220.8 363.9 219.8 362.2 218.7 360.6 217.5 359.0 216.2 357.4 214.8 355.9 213.3 354.5 211.7 353.2 209.9 352.1 208.0 351.2 206.0 350.4 204.0 349.8ZM198.2,340.5L201.8 339.8 205.4 338.9 208.9 337.9 212.2 337.0 215.4 336.6 218.5 336.5 221.5 336.8 224.5 337.4 227.4 338.2 230.1 339.3 232.8 340.6 235.4 342.3 237.9 344.2 240.3 346.2 242.5 348.2 244.3 350.1 246.0 352.0 247.7 353.9 249.3 355.8 251.1 357.6 251.1 357.6 249.8 355.4 248.6 353.2 247.2 351.0 245.6 348.9 243.6 346.9 241.4 344.9 239.0 342.9 236.4 340.9 233.6 339.1 230.8 337.7 227.9 336.6 224.9 335.7 221.8 335.1 218.6 334.8 215.3 334.9 211.9 335.3 208.4 336.3 204.9 337.5 201.5 339.0 198.2 340.5ZM243.0,383.8L241.5 385.1 239.9 386.4 238.3 387.7 236.8 389.2 235.4 390.9 234.1 392.9 233.1 395.1 232.1 397.3 231.0 399.6 229.8 401.8 228.4 404.0 226.9 406.3 225.4 408.6 223.7 410.9 221.8 413.0 219.7 415.1 217.5 417.1 215.2 419.1 212.6 420.9 210.0 422.4 207.0 423.6 203.9 424.5 200.5 425.5 197.2 426.5 193.9 427.6 193.9 427.6 197.3 427.1 200.8 426.7 204.3 426.0 207.6 425.1 210.7 423.8 213.5 422.2 216.1 420.4 218.6 418.3 220.9 416.2 223.0 414.1 224.9 411.9 226.7 409.6 228.3 407.2 229.7 404.9 231.1 402.6 232.4 400.3 233.5 398.0 234.5 395.8 235.5 393.7 236.6 391.8 237.8 390.1 239.1 388.5 240.4 387.0 241.8 385.4 243.0 383.8ZM246.3,372.0L247.9 372.8 249.6 373.3 251.3 373.5 252.8 373.8 254.1 374.2 255.0 374.8 255.9 375.4 256.5 376.2 257.1 376.9 257.4 377.6 257.5 378.0 257.6 378.6 257.6 379.2 257.6 380.0 257.7 380.8 257.7 380.8 258.1 380.2 258.6 379.6 259.0 378.8 259.1 377.9 258.9 377.0 258.4 376.1 257.8 375.2 257.0 374.3 255.9 373.4 254.7 372.8 253.2 372.3 251.6 371.9 249.9 371.7 248.1 371.6 246.3 372.0ZM353.0,188.6L351.5 191.0 350.0 193.3 348.6 195.7 347.1 198.2 345.6 201.0 344.0 204.1 342.3 207.4 340.7 210.9 339.0 214.5 337.5 218.2 336.0 221.8 334.6 225.5 333.2 229.3 331.9 233.2 330.7 237.1 329.5 241.1 328.4 245.1 327.4 249.2 326.5 253.3 325.6 257.3 324.9 261.1 324.2 264.9 323.7 268.7 323.2 272.5 322.7 276.2 322.7 276.2 323.5 272.5 324.2 268.8 324.9 265.1 325.6 261.3 326.4 257.4 327.3 253.5 328.2 249.4 329.2 245.3 330.3 241.3 331.4 237.3 332.7 233.4 334.0 229.6 335.3 225.8 336.8 222.1 338.2 218.5 339.8 214.9 341.4 211.3 343.1 207.8 344.7 204.5 346.3 201.4 347.7 198.5 349.1 196.0 350.4 193.5 351.7 191.1 353.0 188.6ZM344.2,292.9L343.4 293.9 342.8 295.0 342.3 296.1 341.8 297.2 341.3 298.2 340.7 299.3 340.0 300.3 339.4 301.3 338.8 302.3 338.4 303.5 338.4 303.5 339.3 302.6 340.0 301.7 340.7 300.7 341.4 299.7 342.0 298.6 342.5 297.5 343.1 296.4 343.6 295.3 343.9 294.1 344.2 292.9ZM353.0,263.9L353.1 265.3 353.3 266.6 353.7 267.9 354.1 269.2 354.6 270.4 355.2 271.5 355.8 272.5 356.4 273.5 357.1 274.4 358.0 275.3 358.0 275.3 357.6 274.1 357.1 273.1 356.5 272.1 355.9 271.1 355.4 270.1 354.9 268.9 354.5 267.7 354.1 266.4 353.7 265.1 353.0 263.9ZM349.2,255.1L349.1 256.7 349.2 258.3 349.5 259.9 349.7 261.4 350.1 262.8 350.5 264.0 351.0 265.1 351.6 266.0 352.2 266.9 353.0 267.7 353.0 267.7 352.7 266.6 352.2 265.6 351.7 264.7 351.2 263.7 350.8 262.6 350.5 261.2 350.3 259.8 350.0 258.2 349.8 256.6 349.2 255.1ZM274.5,361.9L277.6 360.6 280.5 359.0 283.3 357.4 286.1 355.7 288.7 354.0 291.0 352.3 293.3 350.6 295.4 348.8 297.3 347.0 299.2 345.0 299.2 345.0 296.9 346.5 294.7 348.1 292.6 349.8 290.4 351.5 288.1 353.2 285.5 354.8 282.8 356.5 280.0 358.2 277.1 359.9 274.5 361.9ZM229.2,385.8L229.7 386.8 230.5 387.6 231.3 388.4 232.1 389.0 233.0 389.3 233.8 389.0 234.5 388.4 235.1 387.6 235.6 386.7 236.0 385.8 236.0 385.8 235.2 386.3 234.5 387.1 233.9 387.8 233.4 388.3 233.0 388.5 232.5 388.3 231.8 387.8 231.0 387.0 230.2 386.3 229.2 385.8ZM372.4,172.5L372.5 173.2 372.7 173.9 373.0 174.6 373.6 175.2 374.3 175.5 375.2 175.4 376.1 175.0 377.0 174.5 377.9 173.9 378.5 173.3 379.0 172.6 379.3 171.7 379.5 170.9 379.5 170.0 379.4 169.2 379.4 169.2 378.9 169.9 378.6 170.7 378.4 171.4 378.1 172.1 377.8 172.7 377.2 173.2 376.5 173.7 375.7 174.1 374.9 174.4 374.4 174.5 374.2 174.4 373.9 174.0 373.5 173.5 373.0 172.9 372.4 172.5ZM364.3,196.9L363.5 198.2 362.9 199.5 362.4 200.9 362.0 202.3 361.8 203.7 362.0 205.0 362.3 206.3 362.7 207.5 363.3 208.7 364.1 209.7 364.1 209.7 364.0 208.4 363.6 207.2 363.2 206.0 362.8 204.9 362.7 203.7 362.9 202.5 363.3 201.2 363.7 199.8 364.2 198.4 364.3 196.9ZM348.4,241.0L347.9 242.4 347.5 243.9 347.2 245.5 347.0 247.0 347.0 248.6 347.1 250.1 347.4 251.7 347.8 253.2 348.3 254.7 348.9 256.1 348.9 256.1 348.9 254.5 348.7 253.0 348.3 251.5 348.0 250.0 347.9 248.5 347.9 247.1 348.1 245.6 348.4 244.1 348.5 242.6 348.4 241.0ZM371.4,279.2L369.4 284.2 367.4 289.4 365.4 294.5 363.4 299.2 361.5 303.4 359.7 306.6 358.0 309.3 356.3 311.6 354.4 313.9 352.4 316.4 350.0 319.2 347.3 322.1 344.5 325.1 341.7 328.0 339.2 330.9 337.0 333.7 335.0 336.4 333.1 339.1 331.1 341.6 328.7 344.0 325.9 346.3 322.9 348.5 319.6 350.6 316.3 352.8 312.9 354.8 309.7 356.8 306.4 358.7 303.0 360.5 299.5 362.4 295.9 364.2 292.1 366.0 288.1 367.8 284.0 369.6 280.0 371.3 276.3 372.9 272.8 374.5 269.5 375.9 266.3 377.2 263.1 378.5 259.9 379.9 259.9 379.9 263.1 378.6 266.3 377.4 269.6 376.1 272.9 374.8 276.4 373.4 280.2 371.8 284.3 370.2 288.4 368.5 292.5 366.7 296.3 365.0 300.0 363.3 303.5 361.5 306.9 359.7 310.3 357.8 313.6 355.9 317.0 353.9 320.4 351.9 323.7 349.7 326.8 347.5 329.7 345.1 332.2 342.6 334.3 340.0 336.2 337.3 338.2 334.6 340.3 331.9 342.8 329.0 345.6 326.1 348.4 323.1 351.1 320.2 353.5 317.4 355.6 314.8 357.5 312.5 359.2 310.1 361.0 307.4 362.8 304.0 364.8 299.9 366.8 295.1 368.8 289.9 370.8 284.7 372.7 279.7ZM352.1,302.6L351.2 304.7 350.4 306.7 349.5 308.7 348.5 310.7 347.1 312.9 345.4 315.3 343.4 317.9 341.2 320.6 338.9 323.3 336.5 326.0 334.1 328.6 331.6 331.3 329.0 334.0 326.3 336.6 323.4 339.1 320.5 341.5 317.4 343.7 314.3 346.0 311.0 348.1 307.7 350.2 304.1 352.3 300.4 354.4 296.6 356.4 292.8 358.3 289.3 360.1 285.9 361.8 282.5 363.3 279.3 364.8 276.3 366.2 273.5 367.5 271.2 368.6 269.2 369.6 267.4 370.5 265.7 371.3 263.8 372.2 263.8 372.2 265.8 371.5 267.6 370.8 269.4 370.1 271.5 369.3 273.9 368.3 276.7 367.1 279.7 365.8 283.0 364.4 286.4 362.8 289.8 361.2 293.4 359.4 297.1 357.5 301.0 355.4 304.7 353.4 308.3 351.3 311.7 349.1 315.0 346.9 318.2 344.7 321.2 342.4 324.2 340.0 327.1 337.5 329.8 334.8 332.5 332.1 335.0 329.4 337.4 326.8 339.8 324.1 342.1 321.3 344.3 318.6 346.3 316.0 347.9 313.4 349.2 311.1 350.1 308.9 350.8 306.8 351.4 304.7 352.1 302.6ZM376.7,289.9L375.9 291.5 375.1 293.1 374.3 294.7 373.5 296.5 372.3 298.3 371.0 300.4 369.4 302.5 367.7 304.8 366.0 307.2 364.2 309.9 362.5 312.9 360.8 316.2 359.0 319.5 357.0 322.8 354.9 326.0 352.6 329.0 350.0 332.0 347.2 334.9 344.5 337.7 341.8 340.4 339.1 343.0 336.4 345.6 333.7 348.0 331.1 350.2 328.7 352.2 326.5 353.9 324.4 355.2 322.4 356.4 320.4 357.6 318.2 358.7 315.9 360.0 313.5 361.2 311.1 362.5 308.7 363.7 306.5 364.8 304.3 365.8 302.2 366.8 300.2 367.7 298.2 368.5 296.1 369.5 296.1 369.5 298.3 368.7 300.4 368.1 302.5 367.3 304.6 366.6 306.9 365.7 309.2 364.7 311.7 363.6 314.1 362.4 316.5 361.1 318.9 359.9 321.0 358.7 323.1 357.5 325.1 356.3 327.2 354.9 329.5 353.2 332.0 351.2 334.6 349.0 337.3 346.5 340.0 344.0 342.7 341.3 345.4 338.6 348.2 335.8 350.9 332.8 353.6 329.8 356.0 326.7 358.1 323.5 360.1 320.2 361.9 316.8 363.7 313.6 365.4 310.6 367.1 308.0 368.8 305.5 370.4 303.1 371.8 300.9 373.1 298.8 374.1 296.8 374.8 295.0 375.4 293.3 376.0 291.6 376.7 289.9ZM378.5,304.6L376.4 307.6 374.3 310.6 372.2 313.6 370.2 316.6 368.2 319.5 366.2 322.2 364.1 324.8 362.1 327.4 360.0 330.0 357.7 332.6 355.2 335.3 352.7 338.0 350.1 340.7 347.4 343.3 344.6 345.7 341.5 348.0 338.2 350.3 334.9 352.5 331.7 354.5 328.8 356.2 326.4 357.7 324.3 358.9 322.4 360.0 320.5 361.1 318.5 362.2 318.5 362.2 320.6 361.3 322.6 360.5 324.6 359.6 326.9 358.5 329.3 357.1 332.2 355.4 335.5 353.4 338.8 351.2 342.1 348.9 345.2 346.6 348.1 344.1 350.9 341.4 353.5 338.7 356.1 336.0 358.5 333.3 360.8 330.7 362.9 328.1 365.0 325.5 367.0 322.9 369.1 320.1 371.1 317.2 373.0 314.1 374.9 311.0 376.7 307.8 378.5 304.6ZM383.8,307.2L382.0 309.6 380.4 312.3 378.9 314.9 377.5 317.3 376.2 319.5 374.9 321.4 373.7 323.0 372.6 324.5 371.5 326.0 370.6 327.7 370.6 327.7 372.0 326.3 373.3 325.0 374.4 323.5 375.6 321.9 376.9 320.0 378.3 317.8 379.7 315.3 381.2 312.7 382.7 310.0 383.8 307.2Z"/><ellipse cx="360.0" cy="171.2" rx="3.0" ry="3.0" transform="rotate(0 360.0 171.2)"/><ellipse cx="370.1" cy="203.2" rx="1.8" ry="3.4" transform="rotate(25 370.1 203.2)"/><ellipse cx="330.3" cy="275.8" rx="1.2" ry="2.0" transform="rotate(20 330.3 275.8)"/><ellipse cx="321.5" cy="308.5" rx="1.5" ry="2.2" transform="rotate(10 321.5 308.5)"/><ellipse cx="327.8" cy="324.4" rx="1.2" ry="2.0" transform="rotate(40 327.8 324.4)"/><ellipse cx="352.5" cy="217.8" rx="1.0" ry="1.6" transform="rotate(60 352.5 217.8)"/></g></svg><div class="a" style="left:7px;top:644px;width:989px;height:17.500px;background:#444;border-top:0.8px solid #333"></div><div class="a" style="left:7px;top:661px;width:1260px;height:0.8px;background:#2e2e2e"></div><div class="a c" style="left:14.3px;top:647.200px;width:21.200px;height:12.600px;background:#000;border:0.8px solid #e8e8e8;color:#fff;font-size:8.300px;line-height:12.200px">01</div><div class="a c" style="left:39.9px;top:647.200px;width:21.200px;height:12.600px;background:#0000ff;color:#fff;font-size:8.300px;line-height:13.800px">02</div><div class="a c" style="left:65.5px;top:647.200px;width:21.200px;height:12.600px;background:#ff7f00;color:#fff;font-size:8.300px;line-height:13.800px">03</div><div class="a c" style="left:91.1px;top:647.200px;width:21.200px;height:12.600px;background:#ff00ff;color:#fff;font-size:8.300px;line-height:13.800px">04</div><div class="a c" style="left:116.7px;top:647.200px;width:21.200px;height:12.600px;background:#7f00ff;color:#fff;font-size:8.300px;line-height:13.800px">05</div><div class="a c" style="left:142.3px;top:647.200px;width:21.200px;height:12.600px;background:#ff0000;color:#fff;font-size:8.300px;line-height:13.800px">06</div><div class="a" style="left:168px;top:647.200px;width:21px;height:12.600px;background:#3a3a3a"></div><svg style="left:174.500px;top:649.500px" width="8" height="8" viewBox="0 0 8 8"><path d="M4 0.500v7M0.500 4h7" stroke="#ddd" stroke-width="0.7"/></svg><div class="t" style="left:11px;top:666.700px;font-size:8.300px;color:#f0f0f0">X:542.356 | Y:-165.309</div><div class="a" style="left:996px;top:69px;width:271px;height:592px;background:#444"></div><div class="a" style="left:995.400px;top:69px;width:0.8px;height:576px;background:#333"></div><div class="a" style="left:1002.400px;top:72px;width:265px;height:19px;background:#262626"></div><div class="t" style="left:1007.500px;top:77.9px;font-size:8.300px;color:#f0f0f0">图层</div><svg style="left:1245.500px;top:76px" width="21" height="9" viewBox="0 0 21 9"><path d="M0.900 0.900h7v7h-7zM0.900 4h3.300v3.900" fill="none" stroke="#f0f0f0" stroke-width="0.9"/><rect x="5.200" y="5.200" width="1.800" height="1.800" fill="#f0f0f0"/><path d="M12 1l7 7M19 1l-7 7" stroke="#f0f0f0" stroke-width="1"/></svg><div class="a" style="left:1010px;top:98.600px;width:250px;height:118px;background:#262626"></div><div class="t c" style="left:991.5px;top:103.900px;width:80px;font-size:8.300px;color:#d8d8d8">#</div><div class="t c" style="left:1031px;top:103.900px;width:80px;font-size:8.300px;color:#d8d8d8">图层</div><div class="t c" style="left:1084.5px;top:103.900px;width:80px;font-size:8.300px;color:#d8d8d8">模式</div><div class="t c" style="left:1143.5px;top:103.900px;width:80px;font-size:8.300px;color:#d8d8d8">速度(mm/s)</div><div class="t c" style="left:1189.5px;top:103.900px;width:80px;font-size:8.300px;color:#d8d8d8">功率%</div><div class="a" style="left:1012px;top:113.800px;width:246px;height:15.400px;background:#2d6a94"></div><svg style="left:1026px;top:118.300px" width="9" height="6" viewBox="0 0 9 6"><path d="M0.300 3C1.500 1.100 2.900 0.300 4.500 0.300S7.500 1.100 8.700 3C7.500 4.900 6.100 5.700 4.500 5.700S1.500 4.900 0.300 3z" fill="#f4f4f4"/><circle cx="4.500" cy="3" r="1.500" fill="#2d6a94"/><circle cx="4.500" cy="3" r="0.700" fill="#f4f4f4"/></svg><div class="a c" style="left:1053px;top:114.800px;width:38px;height:13.200px;background:#000;border-radius:1.500px;color:#fff;font-size:9.400px;line-height:14.200px;font-family:'Liberation Serif',serif">01</div><div class="a" style="left:1092.500px;top:114.200px;width:64px;height:14.600px;border:0.7px solid #1f5275;background:#2b678f"></div><div class="a" style="left:1097px;top:117.200px;width:9px;height:9px;background:#38b0ff"></div><div class="t" style="left:1112px;top:117.600px;font-size:8.300px;color:#38b0ff">填充</div><svg style="left:1145px;top:119.300px" width="7" height="6" viewBox="0 0 7 6"><path d="M0.300 0.500h6.400L3.500 5.500z" fill="#38b0ff"/></svg><div class="a c" style="left:1158.500px;top:114.800px;width:50.500px;height:13.400px;border:0.8px solid #2f6d98;background:#262626;color:#38b0ff;font-size:8.500px;line-height:12.900px">100.00</div><div class="a c" style="left:1211px;top:114.800px;width:38.500px;height:13.400px;border:0.8px solid #2f6d98;background:#262626;color:#38b0ff;font-size:8.500px;line-height:12.900px">100.00</div><div class="a" style="left:1012px;top:209px;width:188px;height:6px;background:#4a5a66"></div><svg style="left:1200px;top:209px" width="58" height="6" viewBox="0 0 58 6"><rect width="58" height="6" fill="#555"/><path d="M0.0 0.0h1.2v1.2h-1.2zM0.0 2.4h1.2v1.2h-1.2zM0.0 4.8h1.2v1.2h-1.2zM1.2 1.2h1.2v1.2h-1.2zM1.2 3.6h1.2v1.2h-1.2zM2.4 0.0h1.2v1.2h-1.2zM2.4 2.4h1.2v1.2h-1.2zM2.4 4.8h1.2v1.2h-1.2zM3.6 1.2h1.2v1.2h-1.2zM3.6 3.6h1.2v1.2h-1.2zM4.8 0.0h1.2v1.2h-1.2zM4.8 2.4h1.2v1.2h-1.2zM4.8 4.8h1.2v1.2h-1.2zM6.0 1.2h1.2v1.2h-1.2zM6.0 3.6h1.2v1.2h-1.2zM7.2 0.0h1.2v1.2h-1.2zM7.2 2.4h1.2v1.2h-1.2zM7.2 4.8h1.2v1.2h-1.2zM8.4 1.2h1.2v1.2h-1.2zM8.4 3.6h1.2v1.2h-1.2zM9.6 0.0h1.2v1.2h-1.2zM9.6 2.4h1.2v1.2h-1.2zM9.6 4.8h1.2v1.2h-1.2zM10.8 1.2h1.2v1.2h-1.2zM10.8 3.6h1.2v1.2h-1.2zM12.0 0.0h1.2v1.2h-1.2zM12.0 2.4h1.2v1.2h-1.2zM12.0 4.8h1.2v1.2h-1.2zM13.2 1.2h1.2v1.2h-1.2zM13.2 3.6h1.2v1.2h-1.2zM14.4 0.0h1.2v1.2h-1.2zM14.4 2.4h1.2v1.2h-1.2zM14.4 4.8h1.2v1.2h-1.2zM15.6 1.2h1.2v1.2h-1.2zM15.6 3.6h1.2v1.2h-1.2zM16.8 0.0h1.2v1.2h-1.2zM16.8 2.4h1.2v1.2h-1.2zM16.8 4.8h1.2v1.2h-1.2zM18.0 1.2h1.2v1.2h-1.2zM18.0 3.6h1.2v1.2h-1.2zM19.2 0.0h1.2v1.2h-1.2zM19.2 2.4h1.2v1.2h-1.2zM19.2 4.8h1.2v1.2h-1.2zM20.4 1.2h1.2v1.2h-1.2zM20.4 3.6h1.2v1.2h-1.2zM21.6 0.0h1.2v1.2h-1.2zM21.6 2.4h1.2v1.2h-1.2zM21.6 4.8h1.2v1.2h-1.2zM22.8 1.2h1.2v1.2h-1.2zM22.8 3.6h1.2v1.2h-1.2zM24.0 0.0h1.2v1.2h-1.2zM24.0 2.4h1.2v1.2h-1.2zM24.0 4.8h1.2v1.2h-1.2zM25.2 1.2h1.2v1.2h-1.2zM25.2 3.6h1.2v1.2h-1.2zM26.4 0.0h1.2v1.2h-1.2zM26.4 2.4h1.2v1.2h-1.2zM26.4 4.8h1.2v1.2h-1.2zM27.6 1.2h1.2v1.2h-1.2zM27.6 3.6h1.2v1.2h-1.2zM28.8 0.0h1.2v1.2h-1.2zM28.8 2.4h1.2v1.2h-1.2zM28.8 4.8h1.2v1.2h-1.2zM30.0 1.2h1.2v1.2h-1.2zM30.0 3.6h1.2v1.2h-1.2zM31.2 0.0h1.2v1.2h-1.2zM31.2 2.4h1.2v1.2h-1.2zM31.2 4.8h1.2v1.2h-1.2zM32.4 1.2h1.2v1.2h-1.2zM32.4 3.6h1.2v1.2h-1.2zM33.6 0.0h1.2v1.2h-1.2zM33.6 2.4h1.2v1.2h-1.2zM33.6 4.8h1.2v1.2h-1.2zM34.8 1.2h1.2v1.2h-1.2zM34.8 3.6h1.2v1.2h-1.2zM36.0 0.0h1.2v1.2h-1.2zM36.0 2.4h1.2v1.2h-1.2zM36.0 4.8h1.2v1.2h-1.2zM37.2 1.2h1.2v1.2h-1.2zM37.2 3.6h1.2v1.2h-1.2zM38.4 0.0h1.2v1.2h-1.2zM38.4 2.4h1.2v1.2h-1.2zM38.4 4.8h1.2v1.2h-1.2zM39.6 1.2h1.2v1.2h-1.2zM39.6 3.6h1.2v1.2h-1.2zM40.8 0.0h1.2v1.2h-1.2zM40.8 2.4h1.2v1.2h-1.2zM40.8 4.8h1.2v1.2h-1.2zM42.0 1.2h1.2v1.2h-1.2zM42.0 3.6h1.2v1.2h-1.2zM43.2 0.0h1.2v1.2h-1.2zM43.2 2.4h1.2v1.2h-1.2zM43.2 4.8h1.2v1.2h-1.2zM44.4 1.2h1.2v1.2h-1.2zM44.4 3.6h1.2v1.2h-1.2zM45.6 0.0h1.2v1.2h-1.2zM45.6 2.4h1.2v1.2h-1.2zM45.6 4.8h1.2v1.2h-1.2zM46.8 1.2h1.2v1.2h-1.2zM46.8 3.6h1.2v1.2h-1.2zM48.0 0.0h1.2v1.2h-1.2zM48.0 2.4h1.2v1.2h-1.2zM48.0 4.8h1.2v1.2h-1.2zM49.2 1.2h1.2v1.2h-1.2zM49.2 3.6h1.2v1.2h-1.2zM50.4 0.0h1.2v1.2h-1.2zM50.4 2.4h1.2v1.2h-1.2zM50.4 4.8h1.2v1.2h-1.2zM51.6 1.2h1.2v1.2h-1.2zM51.6 3.6h1.2v1.2h-1.2zM52.8 0.0h1.2v1.2h-1.2zM52.8 2.4h1.2v1.2h-1.2zM52.8 4.8h1.2v1.2h-1.2zM54.0 1.2h1.2v1.2h-1.2zM54.0 3.6h1.2v1.2h-1.2zM55.2 0.0h1.2v1.2h-1.2zM55.2 2.4h1.2v1.2h-1.2zM55.2 4.8h1.2v1.2h-1.2zM56.4 1.2h1.2v1.2h-1.2zM56.4 3.6h1.2v1.2h-1.2z" fill="#dcdcdc"/></svg><svg style="left:1199.500px;top:222.500px" width="10" height="11" viewBox="0 0 10 11"><path d="M5 0.500L9.300 3.200 5 5.900 0.700 3.200z" fill="#f2f2f2"/><path d="M1 6.300l4 2.500 4-2.500" fill="none" stroke="#f2f2f2" stroke-width="1"/><path d="M3.300 9l1.700 1.300L6.700 9" fill="none" stroke="#f2f2f2" stroke-width="0.8"/></svg><svg style="left:1224px;top:222.500px" width="10" height="11" viewBox="0 0 10 11"><path d="M5 4.300L9.300 7 5 9.700 0.700 7z" fill="#f2f2f2"/><path d="M1 4.200l4-2.600 4 2.600" fill="none" stroke="#f2f2f2" stroke-width="1"/></svg><svg style="left:1249px;top:223px" width="9" height="10" viewBox="0 0 9 10"><path d="M0.800 1.800h7.400M3.200 1.800V0.700h2.600v1.100" stroke="#f2f2f2" stroke-width="0.9" fill="none"/><path d="M1.400 2.800h6.200v6.500H1.400z" fill="#f2f2f2"/><path d="M3.400 4v4M5.600 4v4" stroke="#444" stroke-width="0.7"/></svg><div class="a" style="left:1002.400px;top:242.500px;width:265px;height:20.500px;background:#262626"></div><div class="a" style="left:1002.400px;top:261.300px;width:36.600px;height:1.700px;background:#2e9cea"></div><div class="t" style="left:1012.300px;top:248.300px;font-size:8.400px;color:#38a8f8">图层</div><div class="t" style="left:1049px;top:248.300px;font-size:8.400px;color:#fff;font-weight:bold">设计</div><div class="t" style="left:1086px;top:248.300px;font-size:8.400px;color:#fff;font-weight:bold">移动</div><svg style="left:1128px;top:265.500px" width="12" height="2" viewBox="0 0 12 2"><path d="M0.500 1h11" stroke="#606060" stroke-width="0.8" stroke-dasharray="1 1.500"/></svg><div class="a" style="left:1002.400px;top:272.4px;width:265px;height:19px;background:#262626"></div><div class="t" style="left:1007.500px;top:278.3px;font-size:8.300px;color:#f0f0f0">激光</div><svg style="left:1245.500px;top:276.4px" width="21" height="9" viewBox="0 0 21 9"><path d="M0.900 0.900h7v7h-7zM0.900 4h3.300v3.900" fill="none" stroke="#f0f0f0" stroke-width="0.9"/><rect x="5.200" y="5.200" width="1.800" height="1.800" fill="#f0f0f0"/><path d="M12 1l7 7M19 1l-7 7" stroke="#f0f0f0" stroke-width="1"/></svg><div class="a" style="left:1013px;top:302px;width:244px;height:85px;background:#343434"></div><div class="t" style="left:1026.600px;top:312.300px;font-size:8.300px;color:#f0f0f0">设备型号：DavcarveL1</div><div class="t" style="left:1163.400px;top:311.800px;width:80px;text-align:right;font-size:8.900px;color:#3a9ee8">Disconnected</div><div class="a" style="left:1026px;top:329.300px;width:64.800px;height:21.700px;border:0.9px solid #52b030;border-radius:2px"></div><svg style="left:1036px;top:335.500px" width="7" height="9" viewBox="0 0 7 9"><path d="M3.500 0.300v8.400M1.200 2.600v2.200l2.300 1.300M5.800 1.800v2.600L3.500 5.700" stroke="#52b030" stroke-width="1.1" fill="none"/><circle cx="3.500" cy="8" r="1.1" fill="#52b030"/></svg><div class="t" style="left:1047.500px;top:336.900px;font-size:8.400px;color:#52b030">USB连接</div><div class="a" style="left:1026px;top:357.200px;width:64.800px;height:21px;border:0.9px solid #6a6a6a;border-radius:2px"></div><svg style="left:1034.500px;top:364px" width="10" height="7" viewBox="0 0 10 7"><path d="M2 0.500h6l1.600 3v3H0.400v-3z" fill="#f0f0f0"/><path d="M1.500 4.600h7" stroke="#343434" stroke-width="0.8"/></svg><div class="t" style="left:1047.500px;top:364.300px;font-size:8.400px;color:#f0f0f0">切换设备</div><svg style="left:1178px;top:344px" width="66" height="21" viewBox="0 0 66 21"><defs><linearGradient id="dg" x1="0" y1="0" x2="0" y2="1"><stop offset="0" stop-color="#b9b4c6"/><stop offset="0.450" stop-color="#8f8a9c"/><stop offset="1" stop-color="#6d6878"/></linearGradient></defs><path d="M15 9.500V7.500q0-2 2-2H41" fill="none" stroke="#24242a" stroke-width="0.9"/><rect x="41" y="1.500" width="6" height="9" fill="#9a95a8"/><rect x="0.500" y="10.600" width="65" height="6.600" fill="url(#dg)"/><rect x="4" y="9.900" width="58" height="0.800" fill="#aaa5b8"/><rect x="1.500" y="17.200" width="63" height="1.300" fill="#2a2a30"/><rect x="9" y="18.500" width="52" height="1.100" fill="#77738a"/></svg><div class="btn" style="left:1013px;top:394px;width:118px;height:20.500px">更新覆盖图片</div><div class="btn" style="left:1138.800px;top:394px;width:118px;height:20.500px">快速移动</div><div class="t" style="left:1013px;top:430.600px;font-size:8.400px;color:#fff;font-weight:bold">激光控制</div><div class="btn" style="left:1013px;top:445px;width:76px;height:20.600px"><svg style="position:static;margin-right:2.500px" width="10" height="10" viewBox="0 0 10 10"><path d="M0.600 3V0.600H3M7 0.600h2.400V3M9.400 7v2.400H7M3 9.400H0.600V7" fill="none" stroke="#eee" stroke-width="0.8" stroke-dasharray="1.200 0.800"/><path d="M5 3v4M3 5h4" stroke="#eee" stroke-width="0.900"/></svg>对焦</div><div class="btn" style="left:1097px;top:445px;width:75.4px;height:20.600px"><svg style="position:static;margin-right:2.500px" width="10" height="10" viewBox="0 0 10 10"><circle cx="5" cy="5" r="3.200" fill="none" stroke="#eee" stroke-width="0.800"/><circle cx="5" cy="5" r="1.300" fill="#eee"/><path d="M5 0.300v1.500M5 8.200v1.500M0.300 5h1.500M8.200 5h1.500" stroke="#eee" stroke-width="0.800"/></svg>复位</div><div class="btn" style="left:1180.4px;top:445px;width:76.4px;height:20.600px"><svg style="position:static;margin-right:3px" width="10" height="10" viewBox="0 0 10 10"><rect x="1" y="1" width="8" height="8" fill="none" stroke="#eee" stroke-width="0.800"/><g fill="#eee"><rect x="0" y="0" width="2.200" height="2.200"/><rect x="7.800" y="0" width="2.200" height="2.200"/><rect x="0" y="7.800" width="2.200" height="2.200"/><rect x="7.800" y="7.800" width="2.200" height="2.200"/></g></svg>边框</div><div class="btn" style="left:1013px;top:473.800px;width:76px;height:20.700px">仿真加工</div><div class="btn" style="left:1097px;top:473.800px;width:75.4px;height:20.700px">恢复</div><div class="btn" style="left:1180.4px;top:473.800px;width:76.4px;height:20.700px">保存GCode</div><div class="t" style="left:1166px;top:506px;font-size:8.300px;color:#f4f4f4">开始位置</div><div class="t" style="left:1204.800px;top:506px;font-size:8.300px;color:#38a8f8">当前位置</div><svg style="left:1244.500px;top:507.500px" width="6" height="5" viewBox="0 0 6 5"><path d="M0.300 0.300h5.400L3 4.700z" fill="#38a8f8"/></svg><div class="a" style="left:1202px;top:519px;width:54.800px;height:48.600px;border:0.8px solid #2a2a2a;border-radius:2px"></div><svg style="left:1202px;top:519px" width="55" height="49" viewBox="0 0 55 49"><circle cx="9.3" cy="10.3" r="3.800" fill="none" stroke="#2e8fd6" stroke-width="0.800"/><circle cx="25.7" cy="10.3" r="3.800" fill="none" stroke="#2e8fd6" stroke-width="0.800"/><circle cx="41.9" cy="10.3" r="3.800" fill="none" stroke="#2e8fd6" stroke-width="0.800"/><circle cx="41.9" cy="10.3" r="2.400" fill="#38a8f8"/><circle cx="9.3" cy="24.7" r="3.800" fill="none" stroke="#2e8fd6" stroke-width="0.800"/><circle cx="25.7" cy="24.7" r="3.800" fill="none" stroke="#2e8fd6" stroke-width="0.800"/><circle cx="41.9" cy="24.7" r="3.800" fill="none" stroke="#2e8fd6" stroke-width="0.800"/><circle cx="9.3" cy="39.2" r="3.800" fill="none" stroke="#2e8fd6" stroke-width="0.800"/><circle cx="25.7" cy="39.2" r="3.800" fill="none" stroke="#2e8fd6" stroke-width="0.800"/><circle cx="41.9" cy="39.2" r="3.800" fill="none" stroke="#2e8fd6" stroke-width="0.800"/></svg><div class="t" style="left:1166px;top:540.600px;font-size:8.300px;color:#f4f4f4">作业原点</div><div class="btn" style="left:1013px;top:603px;width:117.400px;height:21px;background:#38b0ff;color:#9fd6fb;border-radius:0"><svg style="position:static;margin-right:3px" width="8" height="8" viewBox="0 0 8 8"><path d="M0.300 0.300L6 4 0.300 7.700z" fill="#e8f4ff"/><path d="M7.200 0.300v7.400" stroke="#e8f4ff" stroke-width="1"/></svg>开始加工</div><div class="btn" style="left:1139px;top:603px;width:117.500px;height:21px;background:#ff4040;color:#ff9c9c;border-radius:0"><svg style="position:static;margin-right:5px" width="7" height="7" viewBox="0 0 7 7"><rect x="0.300" y="0.300" width="6.400" height="6.400" fill="#f0e0e0"/></svg>停止加工</div><div class="a" style="left:1002.500px;top:641px;width:265px;height:4px;background:#6a6a6a"></div><svg style="left:996.500px;top:350px" width="3" height="14" viewBox="0 0 3 14"><path d="M1.500 0.500v13" stroke="#5c5c5c" stroke-width="0.800" stroke-dasharray="1 1.500"/></svg><div class="a" style="left:469.400px;top:203.500px;width:510.200px;height:452.200px;border-radius:4px;background:#444;box-shadow:0 12px 26px rgba(0,0,0,0.560),0 1px 4px rgba(0,0,0,0.250);overflow:hidden"><div class="a" style="left:0;top:0;width:100%;height:20.500px;background:#eef2f8"></div></div><div class="a" style="left:475px;top:208px;width:9.800px;height:9.800px;border-radius:2px;background:#2da0f5"></div><svg style="left:475px;top:208px" width="10" height="10" viewBox="0 0 10 10"><circle cx="5" cy="5.200" r="2.600" fill="none" stroke="#d8eeff" stroke-width="1"/><circle cx="5.600" cy="5.600" r="1" fill="#fff"/></svg><div class="t" style="left:489px;top:209.600px;font-size:7.800px;color:#1a1a1a">预览</div><svg style="left:965.500px;top:210px" width="8" height="8" viewBox="0 0 8 8"><path d="M0.800 0.800l6.400 6.400M7.200 0.800L0.800 7.200" stroke="#222" stroke-width="0.800"/></svg><div class="a" style="left:478px;top:232px;width:493px;height:360.800px;background:#fff"></div><svg style="left:0;top:0" width="1267" height="683" viewBox="0 0 1267 683"><defs><clipPath id="wc"><path d="M821.4,254.1L822.0 254.4 822.7 254.6 823.4 254.8 824.0 255.1 824.6 255.5 825.1 256.0 825.4 256.7 825.6 257.5 825.8 258.4 825.9 259.3 825.9 260.3 825.9 261.3 825.9 262.3 825.7 263.3 825.5 264.4 825.3 265.5 825.1 266.6 824.9 267.6 824.7 268.6 824.5 269.6 824.3 270.5 824.2 271.5 824.0 272.4 823.8 273.4 824.4 274.2 824.9 274.9 825.5 275.6 826.0 276.4 826.6 277.2 827.2 278.1 827.8 279.2 828.4 280.2 829.1 281.3 829.7 282.5 830.3 283.9 830.9 285.5 831.5 287.4 832.0 289.5 832.5 291.8 833.0 294.2 833.5 296.7 833.9 299.2 834.2 301.9 834.5 304.6 834.8 307.4 835.0 310.2 835.2 313.2 835.3 316.1 835.3 319.2 835.2 322.3 835.1 325.5 834.9 328.7 834.7 331.9 834.4 335.1 834.1 338.3 833.7 341.5 833.3 344.7 832.8 347.9 832.3 351.0 831.8 354.1 831.2 357.2 830.5 360.2 829.8 363.2 829.1 366.2 828.4 369.2 827.7 372.0 827.1 374.9 826.4 377.6 825.7 380.3 825.0 383.0 824.4 385.7 823.7 388.4 824.6 389.1 825.5 389.8 826.5 390.5 827.4 391.2 828.3 391.9 829.3 392.6 830.3 393.2 831.2 393.8 832.2 394.4 833.2 395.0 834.4 395.6 835.7 396.3 837.3 397.1 839.2 397.9 841.2 398.7 843.2 399.6 844.9 400.4 846.3 401.1 847.3 401.6 848.1 402.1 848.6 402.6 849.0 403.0 849.2 403.4 849.3 403.9 849.2 404.5 849.1 405.1 848.8 405.7 848.3 406.3 847.6 406.9 846.8 407.4 845.8 407.9 844.6 408.3 843.2 408.8 841.6 409.2 840.0 409.4 838.4 409.6 836.8 409.6 835.0 409.5 833.1 409.3 831.3 409.0 829.4 408.8 827.7 408.5 826.1 408.3 824.6 408.1 823.1 407.8 821.7 407.6 820.2 407.3 818.7 407.1 818.1 407.9 817.5 408.8 816.8 409.6 816.2 410.5 815.6 411.3 815.0 412.1 814.4 412.9 813.9 413.7 813.3 414.5 812.8 415.3 812.2 416.1 811.7 416.9 811.5 418.0 811.3 419.1 811.1 420.2 810.9 421.3 810.8 422.5 810.8 423.7 810.8 425.1 811.0 426.5 811.3 428.0 811.5 429.5 811.7 431.1 811.8 432.7 811.8 434.4 811.8 436.2 811.7 438.1 811.6 439.9 811.4 441.7 811.2 443.3 810.9 444.7 810.6 446.1 810.2 447.4 809.7 448.6 809.2 449.7 808.6 450.6 808.0 451.4 807.2 452.2 806.4 452.7 805.5 453.2 804.7 453.4 803.9 453.5 803.1 453.3 802.4 453.0 801.6 452.5 800.9 451.8 800.0 451.0 799.1 450.1 798.0 449.0 796.8 447.7 795.5 446.3 794.2 444.8 792.9 443.3 791.7 441.9 790.6 443.1 789.6 444.3 788.6 445.5 787.5 446.7 786.3 448.2 785.0 449.9 783.4 452.0 781.7 454.4 779.9 456.9 778.0 459.6 776.1 462.1 774.3 464.5 772.5 466.6 770.8 468.6 769.1 470.5 767.3 472.4 765.5 474.3 763.5 476.4 761.5 478.5 759.4 480.8 757.2 483.1 755.0 485.4 752.7 487.6 750.3 489.7 747.8 491.6 745.2 493.5 742.5 495.3 739.8 497.0 737.0 498.7 734.1 500.3 731.1 502.0 727.9 503.8 724.5 505.5 721.3 507.1 718.2 508.5 715.5 509.6 713.1 510.4 711.0 511.0 709.2 511.3 707.4 511.6 705.6 511.8 703.8 512.1 702.0 512.5 700.4 512.7 698.8 512.9 697.0 513.2 695.0 513.6 692.6 514.2 689.6 514.9 686.2 515.8 682.6 516.8 678.9 517.9 675.2 519.0 671.7 520.1 668.3 521.1 665.1 522.2 661.9 523.3 658.7 524.4 655.5 525.5 652.3 526.6 651.5 527.2 650.6 527.8 649.8 528.4 648.9 529.1 648.0 529.8 646.9 530.6 645.7 531.5 644.4 532.5 643.0 533.6 641.6 534.7 640.3 536.0 639.0 537.3 637.8 538.6 636.7 540.0 635.6 541.5 634.6 543.0 633.5 544.7 632.3 546.5 631.1 548.6 629.9 550.8 628.6 553.1 627.3 555.4 625.8 557.7 624.2 559.8 622.5 561.8 620.6 563.7 618.6 565.6 616.5 567.3 614.4 569.0 612.2 570.5 610.1 571.9 607.9 573.1 605.6 574.3 603.4 575.3 601.1 576.3 598.9 577.1 596.6 578.0 594.3 578.7 592.0 579.4 589.8 579.9 587.6 580.4 585.5 580.6 583.5 580.7 581.6 580.6 579.8 580.3 578.1 580.0 576.4 579.5 574.8 579.0 573.2 578.4 571.8 577.7 570.4 576.9 569.0 576.1 567.7 575.3 566.3 574.5 568.2 574.1 570.0 573.8 571.9 573.4 573.8 573.0 575.6 572.5 577.4 571.9 579.2 571.0 581.0 570.1 582.8 569.0 584.6 567.9 586.4 566.6 588.2 565.2 590.0 563.7 591.9 562.1 593.8 560.3 595.6 558.5 597.3 556.5 598.9 554.6 600.2 552.5 601.4 550.3 602.5 548.1 603.6 545.8 604.6 543.5 605.6 541.3 606.5 539.0 607.4 536.7 608.3 534.4 609.1 532.1 610.0 530.0 610.9 528.0 611.8 526.2 612.7 524.6 613.6 523.1 614.5 521.6 615.4 520.2 616.3 518.7 615.2 517.1 614.1 515.5 613.0 514.0 611.9 512.4 610.8 510.9 609.6 509.4 608.4 508.0 607.1 506.5 605.8 505.1 604.5 503.8 603.0 502.5 601.5 501.4 599.9 500.3 598.1 499.3 596.3 498.3 594.5 497.5 592.6 496.7 590.8 496.1 589.0 495.6 587.3 495.3 585.6 495.1 583.8 495.0 582.0 494.9 580.2 494.7 578.3 494.6 576.3 494.4 574.2 494.3 572.2 494.2 570.1 494.1 568.1 494.0 571.0 492.6 574.0 491.3 576.9 489.9 579.8 488.5 582.7 487.2 585.5 486.0 588.3 484.8 591.0 483.6 593.8 482.4 596.4 481.3 599.0 480.4 601.5 479.7 603.9 479.1 606.2 478.7 608.4 478.4 610.5 478.2 612.7 478.2 614.9 478.3 617.1 478.5 619.4 478.9 621.7 479.4 624.0 480.0 626.2 480.7 628.3 481.4 630.2 482.3 632.1 483.3 634.0 484.3 635.7 485.5 637.4 486.7 639.0 488.1 640.5 489.6 641.9 491.4 643.2 493.2 644.5 495.1 645.7 497.0 646.9 498.7 648.1 500.4 649.3 502.1 650.4 503.7 651.4 505.3 652.5 506.9 653.6 508.6 654.7 508.3 655.7 508.1 656.7 507.8 657.8 507.5 659.0 507.2 660.3 506.7 661.9 506.0 663.6 505.3 665.4 504.4 667.3 503.5 669.2 502.5 671.0 501.4 672.8 500.2 674.6 499.0 676.4 497.6 678.2 496.2 679.9 494.8 681.7 493.4 683.6 491.9 685.5 490.2 687.3 488.6 689.2 487.0 690.9 485.5 692.4 484.1 693.8 482.9 694.9 481.8 696.0 480.8 697.0 479.9 698.0 478.9 699.0 478.0 698.3 477.6 697.6 477.2 696.9 476.8 696.2 476.4 695.6 475.9 695.1 475.3 694.7 474.5 694.3 473.6 693.9 472.5 693.7 471.4 693.6 470.4 693.7 469.5 694.1 468.7 694.7 468.0 695.4 467.4 696.2 466.8 697.0 466.1 697.8 465.5 698.4 464.9 699.1 464.5 699.8 464.0 700.5 463.5 701.2 462.8 702.1 461.8 703.1 460.6 704.3 459.2 705.5 457.7 706.7 456.0 707.8 454.3 708.8 452.5 709.6 450.7 710.4 448.9 711.0 446.9 711.6 444.9 712.2 442.8 712.8 440.5 713.4 438.1 713.9 435.6 714.4 433.0 715.0 430.2 715.5 427.4 716.0 424.6 716.6 421.6 717.1 418.6 717.7 415.4 718.3 412.2 718.9 409.1 719.5 406.0 720.1 403.0 720.6 400.0 721.2 397.0 721.8 394.1 722.4 391.2 723.0 388.4 723.7 385.6 724.4 382.9 725.1 380.2 725.9 377.5 726.7 374.9 727.5 372.5 728.3 370.1 729.1 367.8 730.0 365.7 730.9 363.5 731.9 361.4 732.9 359.2 733.9 356.9 735.0 354.7 736.1 352.4 737.3 350.2 738.4 348.0 739.6 345.9 740.7 343.8 741.8 341.7 743.0 339.7 744.1 337.7 745.2 335.8 746.2 334.0 747.3 332.2 748.3 330.5 749.2 328.9 750.1 327.4 750.9 326.0 751.5 324.7 752.0 323.6 752.3 322.7 752.6 321.9 752.7 321.1 752.8 320.3 752.9 319.3 753.0 318.2 752.9 316.9 752.9 315.6 752.8 314.3 752.8 313.1 752.9 311.9 753.1 310.8 753.4 309.8 753.7 308.8 754.1 307.9 754.5 307.0 755.0 306.1 755.6 305.3 756.2 304.5 756.9 303.7 757.6 302.9 758.5 302.1 759.6 301.3 760.9 300.4 762.3 299.5 763.9 298.5 765.6 297.6 767.3 296.6 768.9 295.4 770.7 294.3 772.5 293.1 774.3 291.8 776.1 290.5 777.9 289.0 779.7 287.4 781.3 285.7 782.9 283.7 784.4 281.6 785.9 279.5 787.5 277.5 789.0 275.5 790.6 273.6 792.1 271.7 793.7 269.9 795.2 268.1 796.8 266.4 798.3 264.9 799.9 263.5 801.4 262.2 803.0 261.1 804.6 260.0 806.1 259.1 807.7 258.2 809.3 257.5 811.0 256.8 812.7 256.3 814.3 255.8 815.7 255.4 817.0 255.0 818.0 254.8 818.8 254.6 819.5 254.4 820.1 254.3 820.7 254.2Z"/></clipPath></defs><path d="M821.4,254.1L822.0 254.4 822.7 254.6 823.4 254.8 824.0 255.1 824.6 255.5 825.1 256.0 825.4 256.7 825.6 257.5 825.8 258.4 825.9 259.3 825.9 260.3 825.9 261.3 825.9 262.3 825.7 263.3 825.5 264.4 825.3 265.5 825.1 266.6 824.9 267.6 824.7 268.6 824.5 269.6 824.3 270.5 824.2 271.5 824.0 272.4 823.8 273.4 824.4 274.2 824.9 274.9 825.5 275.6 826.0 276.4 826.6 277.2 827.2 278.1 827.8 279.2 828.4 280.2 829.1 281.3 829.7 282.5 830.3 283.9 830.9 285.5 831.5 287.4 832.0 289.5 832.5 291.8 833.0 294.2 833.5 296.7 833.9 299.2 834.2 301.9 834.5 304.6 834.8 307.4 835.0 310.2 835.2 313.2 835.3 316.1 835.3 319.2 835.2 322.3 835.1 325.5 834.9 328.7 834.7 331.9 834.4 335.1 834.1 338.3 833.7 341.5 833.3 344.7 832.8 347.9 832.3 351.0 831.8 354.1 831.2 357.2 830.5 360.2 829.8 363.2 829.1 366.2 828.4 369.2 827.7 372.0 827.1 374.9 826.4 377.6 825.7 380.3 825.0 383.0 824.4 385.7 823.7 388.4 824.6 389.1 825.5 389.8 826.5 390.5 827.4 391.2 828.3 391.9 829.3 392.6 830.3 393.2 831.2 393.8 832.2 394.4 833.2 395.0 834.4 395.6 835.7 396.3 837.3 397.1 839.2 397.9 841.2 398.7 843.2 399.6 844.9 400.4 846.3 401.1 847.3 401.6 848.1 402.1 848.6 402.6 849.0 403.0 849.2 403.4 849.3 403.9 849.2 404.5 849.1 405.1 848.8 405.7 848.3 406.3 847.6 406.9 846.8 407.4 845.8 407.9 844.6 408.3 843.2 408.8 841.6 409.2 840.0 409.4 838.4 409.6 836.8 409.6 835.0 409.5 833.1 409.3 831.3 409.0 829.4 408.8 827.7 408.5 826.1 408.3 824.6 408.1 823.1 407.8 821.7 407.6 820.2 407.3 818.7 407.1 818.1 407.9 817.5 408.8 816.8 409.6 816.2 410.5 815.6 411.3 815.0 412.1 814.4 412.9 813.9 413.7 813.3 414.5 812.8 415.3 812.2 416.1 811.7 416.9 811.5 418.0 811.3 419.1 811.1 420.2 810.9 421.3 810.8 422.5 810.8 423.7 810.8 425.1 811.0 426.5 811.3 428.0 811.5 429.5 811.7 431.1 811.8 432.7 811.8 434.4 811.8 436.2 811.7 438.1 811.6 439.9 811.4 441.7 811.2 443.3 810.9 444.7 810.6 446.1 810.2 447.4 809.7 448.6 809.2 449.7 808.6 450.6 808.0 451.4 807.2 452.2 806.4 452.7 805.5 453.2 804.7 453.4 803.9 453.5 803.1 453.3 802.4 453.0 801.6 452.5 800.9 451.8 800.0 451.0 799.1 450.1 798.0 449.0 796.8 447.7 795.5 446.3 794.2 444.8 792.9 443.3 791.7 441.9 790.6 443.1 789.6 444.3 788.6 445.5 787.5 446.7 786.3 448.2 785.0 449.9 783.4 452.0 781.7 454.4 779.9 456.9 778.0 459.6 776.1 462.1 774.3 464.5 772.5 466.6 770.8 468.6 769.1 470.5 767.3 472.4 765.5 474.3 763.5 476.4 761.5 478.5 759.4 480.8 757.2 483.1 755.0 485.4 752.7 487.6 750.3 489.7 747.8 491.6 745.2 493.5 742.5 495.3 739.8 497.0 737.0 498.7 734.1 500.3 731.1 502.0 727.9 503.8 724.5 505.5 721.3 507.1 718.2 508.5 715.5 509.6 713.1 510.4 711.0 511.0 709.2 511.3 707.4 511.6 705.6 511.8 703.8 512.1 702.0 512.5 700.4 512.7 698.8 512.9 697.0 513.2 695.0 513.6 692.6 514.2 689.6 514.9 686.2 515.8 682.6 516.8 678.9 517.9 675.2 519.0 671.7 520.1 668.3 521.1 665.1 522.2 661.9 523.3 658.7 524.4 655.5 525.5 652.3 526.6 651.5 527.2 650.6 527.8 649.8 528.4 648.9 529.1 648.0 529.8 646.9 530.6 645.7 531.5 644.4 532.5 643.0 533.6 641.6 534.7 640.3 536.0 639.0 537.3 637.8 538.6 636.7 540.0 635.6 541.5 634.6 543.0 633.5 544.7 632.3 546.5 631.1 548.6 629.9 550.8 628.6 553.1 627.3 555.4 625.8 557.7 624.2 559.8 622.5 561.8 620.6 563.7 618.6 565.6 616.5 567.3 614.4 569.0 612.2 570.5 610.1 571.9 607.9 573.1 605.6 574.3 603.4 575.3 601.1 576.3 598.9 577.1 596.6 578.0 594.3 578.7 592.0 579.4 589.8 579.9 587.6 580.4 585.5 580.6 583.5 580.7 581.6 580.6 579.8 580.3 578.1 580.0 576.4 579.5 574.8 579.0 573.2 578.4 571.8 577.7 570.4 576.9 569.0 576.1 567.7 575.3 566.3 574.5 568.2 574.1 570.0 573.8 571.9 573.4 573.8 573.0 575.6 572.5 577.4 571.9 579.2 571.0 581.0 570.1 582.8 569.0 584.6 567.9 586.4 566.6 588.2 565.2 590.0 563.7 591.9 562.1 593.8 560.3 595.6 558.5 597.3 556.5 598.9 554.6 600.2 552.5 601.4 550.3 602.5 548.1 603.6 545.8 604.6 543.5 605.6 541.3 606.5 539.0 607.4 536.7 608.3 534.4 609.1 532.1 610.0 530.0 610.9 528.0 611.8 526.2 612.7 524.6 613.6 523.1 614.5 521.6 615.4 520.2 616.3 518.7 615.2 517.1 614.1 515.5 613.0 514.0 611.9 512.4 610.8 510.9 609.6 509.4 608.4 508.0 607.1 506.5 605.8 505.1 604.5 503.8 603.0 502.5 601.5 501.4 599.9 500.3 598.1 499.3 596.3 498.3 594.5 497.5 592.6 496.7 590.8 496.1 589.0 495.6 587.3 495.3 585.6 495.1 583.8 495.0 582.0 494.9 580.2 494.7 578.3 494.6 576.3 494.4 574.2 494.3 572.2 494.2 570.1 494.1 568.1 494.0 571.0 492.6 574.0 491.3 576.9 489.9 579.8 488.5 582.7 487.2 585.5 486.0 588.3 484.8 591.0 483.6 593.8 482.4 596.4 481.3 599.0 480.4 601.5 479.7 603.9 479.1 606.2 478.7 608.4 478.4 610.5 478.2 612.7 478.2 614.9 478.3 617.1 478.5 619.4 478.9 621.7 479.4 624.0 480.0 626.2 480.7 628.3 481.4 630.2 482.3 632.1 483.3 634.0 484.3 635.7 485.5 637.4 486.7 639.0 488.1 640.5 489.6 641.9 491.4 643.2 493.2 644.5 495.1 645.7 497.0 646.9 498.7 648.1 500.4 649.3 502.1 650.4 503.7 651.4 505.3 652.5 506.9 653.6 508.6 654.7 508.3 655.7 508.1 656.7 507.8 657.8 507.5 659.0 507.2 660.3 506.7 661.9 506.0 663.6 505.3 665.4 504.4 667.3 503.5 669.2 502.5 671.0 501.4 672.8 500.2 674.6 499.0 676.4 497.6 678.2 496.2 679.9 494.8 681.7 493.4 683.6 491.9 685.5 490.2 687.3 488.6 689.2 487.0 690.9 485.5 692.4 484.1 693.8 482.9 694.9 481.8 696.0 480.8 697.0 479.9 698.0 478.9 699.0 478.0 698.3 477.6 697.6 477.2 696.9 476.8 696.2 476.4 695.6 475.9 695.1 475.3 694.7 474.5 694.3 473.6 693.9 472.5 693.7 471.4 693.6 470.4 693.7 469.5 694.1 468.7 694.7 468.0 695.4 467.4 696.2 466.8 697.0 466.1 697.8 465.5 698.4 464.9 699.1 464.5 699.8 464.0 700.5 463.5 701.2 462.8 702.1 461.8 703.1 460.6 704.3 459.2 705.5 457.7 706.7 456.0 707.8 454.3 708.8 452.5 709.6 450.7 710.4 448.9 711.0 446.9 711.6 444.9 712.2 442.8 712.8 440.5 713.4 438.1 713.9 435.6 714.4 433.0 715.0 430.2 715.5 427.4 716.0 424.6 716.6 421.6 717.1 418.6 717.7 415.4 718.3 412.2 718.9 409.1 719.5 406.0 720.1 403.0 720.6 400.0 721.2 397.0 721.8 394.1 722.4 391.2 723.0 388.4 723.7 385.6 724.4 382.9 725.1 380.2 725.9 377.5 726.7 374.9 727.5 372.5 728.3 370.1 729.1 367.8 730.0 365.7 730.9 363.5 731.9 361.4 732.9 359.2 733.9 356.9 735.0 354.7 736.1 352.4 737.3 350.2 738.4 348.0 739.6 345.9 740.7 343.8 741.8 341.7 743.0 339.7 744.1 337.7 745.2 335.8 746.2 334.0 747.3 332.2 748.3 330.5 749.2 328.9 750.1 327.4 750.9 326.0 751.5 324.7 752.0 323.6 752.3 322.7 752.6 321.9 752.7 321.1 752.8 320.3 752.9 319.3 753.0 318.2 752.9 316.9 752.9 315.6 752.8 314.3 752.8 313.1 752.9 311.9 753.1 310.8 753.4 309.8 753.7 308.8 754.1 307.9 754.5 307.0 755.0 306.1 755.6 305.3 756.2 304.5 756.9 303.7 757.6 302.9 758.5 302.1 759.6 301.3 760.9 300.4 762.3 299.5 763.9 298.5 765.6 297.6 767.3 296.6 768.9 295.4 770.7 294.3 772.5 293.1 774.3 291.8 776.1 290.5 777.9 289.0 779.7 287.4 781.3 285.7 782.9 283.7 784.4 281.6 785.9 279.5 787.5 277.5 789.0 275.5 790.6 273.6 792.1 271.7 793.7 269.9 795.2 268.1 796.8 266.4 798.3 264.9 799.9 263.5 801.4 262.2 803.0 261.1 804.6 260.0 806.1 259.1 807.7 258.2 809.3 257.5 811.0 256.8 812.7 256.3 814.3 255.8 815.7 255.4 817.0 255.0 818.0 254.8 818.8 254.6 819.5 254.4 820.1 254.3 820.7 254.2Z" fill="#303030"/><g clip-path="url(#wc)" shape-rendering="crispEdges"><path d="M560 431h300v1h-300zM560 493h300v1h-300zM560 509h300v1h-300z" fill="rgb(96,96,96)"/><path d="M560 279h300v1h-300zM560 315h300v1h-300zM560 389h300v1h-300zM560 415h300v1h-300zM560 429h300v1h-300zM560 488h300v1h-300zM560 519h300v1h-300zM560 526h300v1h-300zM560 539h300v1h-300zM560 553h300v1h-300zM560 564h300v1h-300z" fill="rgb(108,108,108)"/><path d="M560 260h300v1h-300zM560 276h300v1h-300zM560 281h300v1h-300zM560 290h300v1h-300zM560 308h300v1h-300zM560 312h300v1h-300zM560 378h300v1h-300zM560 410h300v1h-300zM560 424h300v1h-300zM560 441h300v1h-300zM560 450h300v1h-300zM560 464h300v1h-300zM560 466h300v1h-300zM560 481h300v1h-300zM560 495h300v1h-300zM560 528h300v1h-300zM560 542h300v1h-300z" fill="rgb(120,120,120)"/><path d="M560 341h300v1h-300zM560 412h300v1h-300zM560 422h300v1h-300zM560 437h300v1h-300zM560 571h300v1h-300zM560 573h300v1h-300z" fill="rgb(132,132,132)"/><path d="M560 306h300v1h-300zM560 326h300v1h-300zM560 330h300v1h-300zM560 348h300v1h-300zM560 367h300v1h-300zM560 370h300v1h-300zM560 380h300v1h-300zM560 385h300v1h-300zM560 514h300v1h-300z" fill="rgb(144,144,144)"/><path d="M560 288h300v1h-300zM560 354h300v1h-300zM560 401h300v1h-300zM560 462h300v1h-300zM560 500h300v1h-300zM560 507h300v1h-300zM560 567h300v1h-300z" fill="rgb(156,156,156)"/><path d="M560 253h300v1h-300zM560 258h300v1h-300zM560 262h300v1h-300zM560 296h300v1h-300zM560 318h300v1h-300zM560 320h300v1h-300zM560 333h300v1h-300zM560 407h300v1h-300zM560 420h300v1h-300zM560 448h300v1h-300zM560 473h300v1h-300zM560 477h300v1h-300zM560 483h300v1h-300zM560 498h300v1h-300zM560 504h300v1h-300zM560 512h300v1h-300zM560 517h300v1h-300zM560 533h300v1h-300zM560 537h300v1h-300zM560 562h300v1h-300z" fill="rgb(168,168,168)"/><path d="M560 265h300v1h-300zM560 269h300v1h-300zM560 299h300v1h-300zM560 304h300v1h-300zM560 310h300v1h-300zM560 346h300v1h-300zM560 362h300v1h-300zM560 373h300v1h-300zM560 395h300v1h-300zM560 426h300v1h-300zM560 443h300v1h-300zM560 445h300v1h-300zM560 454h300v1h-300zM560 544h300v1h-300zM560 546h300v1h-300z" fill="rgb(180,180,180)"/><path d="M560 271h300v1h-300zM560 285h300v1h-300zM560 352h300v1h-300zM560 357h300v1h-300zM560 359h300v1h-300zM560 383h300v1h-300zM560 439h300v1h-300zM560 452h300v1h-300zM560 457h300v1h-300zM560 491h300v1h-300zM560 530h300v1h-300zM560 549h300v1h-300zM560 551h300v1h-300zM560 575h300v1h-300z" fill="rgb(192,192,192)"/><path d="M560 255h300v1h-300zM560 267h300v1h-300zM560 274h300v1h-300zM560 323h300v1h-300zM560 328h300v1h-300zM560 338h300v1h-300zM560 375h300v1h-300zM560 387h300v1h-300zM560 475h300v1h-300zM560 556h300v1h-300z" fill="rgb(204,204,204)"/><path d="M560 283h300v1h-300zM560 294h300v1h-300zM560 301h300v1h-300zM560 336h300v1h-300zM560 364h300v1h-300zM560 398h300v1h-300zM560 404h300v1h-300zM560 418h300v1h-300zM560 434h300v1h-300zM560 460h300v1h-300zM560 479h300v1h-300zM560 485h300v1h-300zM560 522h300v1h-300zM560 524h300v1h-300zM560 535h300v1h-300zM560 559h300v1h-300zM560 569h300v1h-300z" fill="rgb(216,216,216)"/><path d="M560 292h300v1h-300zM560 344h300v1h-300zM560 350h300v1h-300zM560 392h300v1h-300zM560 469h300v1h-300zM560 471h300v1h-300zM560 502h300v1h-300zM560 577h300v1h-300z" fill="rgb(228,228,228)"/></g><path d="M803.7,266.7L801.2 269.0 799.0 271.5 796.8 274.1 794.7 276.6 792.6 279.1 790.4 281.6 788.3 284.0 786.2 286.5 784.1 289.0 782.3 291.7 782.3 291.7 784.7 289.5 787.0 287.2 789.1 284.8 791.3 282.3 793.4 279.8 795.5 277.3 797.7 274.8 799.8 272.2 801.9 269.6 803.7 266.7ZM755.0,327.8L753.3 330.5 751.6 333.1 749.9 335.8 748.2 338.6 746.5 341.7 744.8 345.1 743.0 348.7 741.2 352.5 739.5 356.4 737.9 360.3 736.4 364.2 734.9 368.1 733.5 372.1 732.2 376.2 730.9 380.3 729.7 384.5 728.6 388.7 727.5 393.0 726.5 397.3 725.6 401.6 724.8 405.9 724.2 410.1 723.7 414.4 723.4 418.7 723.0 423.0 723.0 423.0 723.8 418.8 724.6 414.5 725.3 410.3 726.0 406.1 726.8 401.8 727.7 397.6 728.7 393.3 729.8 389.0 730.9 384.8 732.1 380.6 733.4 376.6 734.7 372.5 736.1 368.5 737.5 364.6 739.0 360.8 740.6 356.9 742.4 353.0 744.1 349.2 745.9 345.6 747.6 342.2 749.1 339.1 750.6 336.2 752.1 333.4 753.6 330.7 755.0 327.8ZM756.6,334.0L755.0 336.7 753.4 339.5 751.9 342.3 750.4 345.2 748.9 348.3 747.3 351.6 745.7 354.9 744.0 358.4 742.4 362.0 740.9 365.7 739.5 369.7 738.1 374.0 736.8 378.3 735.7 382.3 734.7 385.6 734.1 388.2 733.8 390.2 733.6 391.8 733.4 393.4 733.1 395.1 733.1 395.1 733.6 393.4 734.0 391.9 734.4 390.3 735.0 388.4 735.8 385.9 736.7 382.6 737.9 378.6 739.1 374.3 740.5 370.0 741.9 366.0 743.4 362.4 745.0 358.9 746.7 355.4 748.3 352.1 749.9 348.8 751.4 345.7 752.8 342.8 754.2 339.9 755.4 336.9 756.6 334.0ZM771.8,354.2L769.6 355.4 767.4 356.5 765.1 357.6 762.9 359.1 760.9 361.0 759.0 363.4 757.3 366.2 755.8 369.2 754.5 372.2 753.6 375.1 752.9 377.8 752.5 380.3 752.3 382.8 752.3 385.2 752.4 387.7 752.6 390.1 753.0 392.6 753.5 395.0 754.2 397.5 755.1 400.2 756.3 403.0 757.7 405.9 759.3 408.9 761.0 411.8 762.8 414.4 764.6 416.6 766.5 418.5 768.5 420.2 770.3 421.9 772.2 423.8 774.0 426.0 775.8 428.3 777.6 430.8 779.5 433.3 781.4 435.8 783.4 438.3 785.5 440.9 787.6 443.5 789.8 445.9 791.8 448.0 793.9 449.8 796.0 451.3 798.0 452.6 800.0 453.5 801.9 454.1 803.5 454.3 805.1 454.0 806.5 453.4 807.6 452.4 808.5 451.1 809.2 449.4 809.7 447.3 810.0 445.0 810.3 442.6 810.6 440.4 810.6 440.4 809.9 442.5 809.2 444.8 808.5 447.0 807.8 448.8 807.0 450.1 806.2 451.0 805.4 451.5 804.5 451.8 803.6 451.8 802.5 451.6 801.1 451.0 799.5 450.1 797.7 448.9 795.8 447.5 793.9 445.8 791.9 443.9 789.9 441.6 787.8 439.0 785.8 436.4 783.8 433.9 781.9 431.5 780.0 429.0 778.1 426.5 776.3 424.1 774.4 421.8 772.4 419.8 770.4 418.0 768.6 416.4 766.8 414.6 765.1 412.7 763.5 410.2 761.9 407.5 760.4 404.6 759.0 401.8 757.9 399.1 757.0 396.7 756.4 394.3 755.9 392.1 755.6 389.8 755.4 387.5 755.3 385.2 755.3 382.9 755.4 380.7 755.8 378.4 756.4 375.9 757.3 373.3 758.5 370.4 759.7 367.4 761.1 364.6 762.5 362.3 764.1 360.3 765.9 358.7 767.8 357.2 769.8 355.8 771.8 354.2ZM771.8,354.2L773.6 355.0 775.5 355.6 777.3 356.2 778.8 357.0 779.8 357.9 780.6 359.2 781.3 360.9 781.9 362.9 782.4 365.1 783.0 367.5 783.5 370.0 783.9 372.6 784.3 375.5 784.8 378.5 785.5 381.5 786.3 384.4 787.3 387.3 788.5 390.2 789.7 393.1 791.1 396.2 792.9 399.5 794.9 403.0 796.9 406.5 798.9 409.7 800.6 412.2 801.8 414.1 802.6 415.6 803.1 416.9 803.6 418.1 804.2 419.4 805.8 418.8 805.2 417.4 804.7 416.2 804.2 414.9 803.5 413.3 802.7 411.1 801.3 408.3 799.5 405.0 797.4 401.6 795.5 398.1 793.8 394.9 792.4 391.9 791.2 389.1 790.1 386.2 789.2 383.5 788.3 380.7 787.7 377.9 787.2 375.1 786.8 372.2 786.4 369.5 785.9 366.9 785.3 364.4 784.7 362.1 784.1 359.8 783.1 357.8 781.7 356.1 779.8 354.9 777.8 354.5 775.7 354.3 773.7 354.3 771.8 354.2ZM772.3,370.0L770.9 370.5 769.4 370.9 768.0 371.4 766.5 372.1 765.2 373.2 764.1 374.5 763.1 376.1 762.3 377.9 761.6 379.8 761.2 381.9 761.0 384.0 761.1 386.3 761.3 388.6 761.6 391.0 762.2 393.5 762.9 395.9 763.8 398.3 764.9 400.7 766.1 403.2 767.5 405.8 769.0 408.5 770.7 411.3 772.6 414.1 774.4 417.0 776.3 419.8 778.2 422.6 780.2 425.4 782.2 428.2 784.2 431.0 786.2 433.7 788.4 436.6 790.6 439.5 792.8 442.2 795.0 444.6 797.0 446.5 798.6 447.7 799.9 448.4 801.0 448.9 802.0 449.2 803.1 449.7 803.1 449.7 802.1 449.0 801.2 448.4 800.3 447.8 799.3 446.9 798.0 445.5 796.5 443.4 794.6 440.8 792.6 438.0 790.4 435.1 788.3 432.3 786.3 429.5 784.3 426.8 782.3 424.0 780.3 421.2 778.4 418.4 776.5 415.6 774.7 412.8 772.9 410.0 771.2 407.2 769.7 404.6 768.4 402.1 767.2 399.7 766.2 397.3 765.3 395.1 764.6 392.8 764.1 390.6 763.8 388.3 763.6 386.2 763.6 384.1 763.7 382.2 764.0 380.4 764.4 378.6 765.0 377.0 765.7 375.5 766.4 374.2 767.3 373.1 768.4 372.3 769.7 371.5 771.1 370.8 772.3 370.0ZM772.3,370.0L773.2 370.9 774.2 371.7 775.2 372.4 776.1 373.1 776.9 374.0 777.6 375.2 778.2 376.6 778.8 378.2 779.3 379.8 779.8 381.3 780.2 382.6 780.6 383.9 781.0 385.2 781.6 386.4 782.2 387.6 782.2 387.6 782.2 386.2 782.1 384.9 781.8 383.6 781.4 382.3 780.9 380.9 780.4 379.4 779.9 377.8 779.3 376.2 778.7 374.7 777.9 373.3 776.9 372.2 775.9 371.4 774.7 370.8 773.5 370.4 772.3 370.0ZM773.3,362.5L774.3 363.2 775.5 363.7 776.6 364.2 777.6 364.7 778.5 365.3 779.3 366.3 780.0 367.6 780.6 369.0 781.2 370.5 781.7 372.0 782.0 373.4 782.3 374.8 782.5 376.3 782.8 377.8 783.3 379.2 783.3 379.2 783.5 377.7 783.5 376.2 783.4 374.7 783.1 373.2 782.8 371.7 782.3 370.2 781.7 368.6 781.0 367.1 780.2 365.7 779.3 364.6 778.2 363.7 777.0 363.2 775.8 362.9 774.5 362.7 773.3 362.5ZM774.3,423.3L772.3 428.3 770.5 433.5 768.7 438.6 767.0 443.4 765.1 448.0 762.9 452.0 760.6 455.7 758.0 459.2 755.2 462.7 751.9 466.2 748.3 470.0 744.2 473.8 739.8 477.7 735.3 481.3 730.8 484.7 726.1 487.7 721.2 490.6 716.2 493.2 711.4 495.6 706.9 497.8 702.9 499.8 699.2 501.5 695.7 503.1 692.3 504.7 688.8 506.5 688.8 506.5 692.5 505.4 696.2 504.4 699.9 503.3 703.8 501.9 708.0 500.2 712.6 498.0 717.4 495.5 722.5 492.8 727.5 489.9 732.3 486.8 736.9 483.4 741.5 479.7 745.9 475.8 750.1 471.9 753.9 468.0 757.2 464.4 760.1 460.8 762.8 457.2 765.2 453.3 767.5 449.1 769.4 444.4 771.0 439.2 772.2 433.9 773.2 428.6 774.3 423.3ZM780.2,431.2L778.8 435.2 777.6 439.2 776.4 443.2 775.1 447.1 773.5 450.8 771.5 454.4 769.3 457.9 766.9 461.3 764.3 464.6 761.6 467.9 758.7 471.0 755.6 474.2 752.3 477.2 749.0 480.1 745.6 482.9 742.2 485.5 738.7 488.0 735.2 490.4 731.7 492.7 728.4 494.8 725.3 496.7 722.6 498.5 719.8 500.1 716.9 501.8 713.7 503.5 710.1 505.5 706.2 507.6 702.1 509.8 698.1 512.1 694.1 514.4 694.1 514.4 698.3 512.6 702.6 510.8 706.8 508.9 710.9 507.0 714.6 505.1 717.8 503.3 720.7 501.7 723.5 500.0 726.3 498.3 729.3 496.3 732.7 494.2 736.2 491.9 739.8 489.5 743.3 487.0 746.8 484.3 750.2 481.5 753.5 478.5 756.8 475.5 760.0 472.3 762.9 469.0 765.7 465.7 768.4 462.4 770.9 458.9 773.1 455.3 775.1 451.6 776.6 447.6 777.7 443.6 778.6 439.5 779.3 435.3 780.2 431.2ZM778.3,447.2L775.6 450.9 773.2 454.8 770.9 458.7 768.5 462.7 765.8 466.8 762.9 471.2 759.7 475.6 756.4 480.2 753.1 484.9 750.2 489.7 750.2 489.7 753.9 485.4 757.3 480.9 760.6 476.3 763.8 471.8 766.7 467.4 769.4 463.3 771.8 459.2 774.1 455.3 776.3 451.3 778.3 447.2ZM616.2,518.7L618.6 518.2 620.9 517.5 623.0 516.6 625.1 515.7 627.3 514.8 629.8 514.0 632.4 513.3 635.1 512.6 637.8 512.0 640.6 511.4 643.2 510.8 645.9 510.3 648.5 509.7 651.1 508.7 653.6 507.5 653.6 507.5 650.8 507.3 648.1 507.4 645.4 507.8 642.7 508.3 640.0 508.9 637.3 509.6 634.5 510.2 631.7 510.9 629.1 511.6 626.5 512.4 624.1 513.4 621.9 514.4 619.9 515.6 618.0 517.1 616.2 518.7ZM594.8,495.3L596.4 497.0 598.1 498.4 600.0 499.5 601.8 500.6 603.4 501.8 604.8 503.2 606.2 504.6 607.5 506.2 608.7 507.9 609.8 509.5 610.9 511.2 611.8 512.9 612.8 514.7 614.1 516.3 615.7 517.9 615.7 517.9 615.4 515.7 614.9 513.7 614.1 511.8 613.1 509.9 611.9 508.1 610.7 506.4 609.5 504.7 608.1 503.0 606.6 501.4 605.0 499.9 603.2 498.6 601.3 497.4 599.3 496.4 597.1 495.7 594.8 495.3ZM588.7,485.4L592.6 484.9 596.4 484.1 600.1 483.1 603.6 482.2 607.0 481.7 610.2 481.7 613.4 482.0 616.5 482.6 619.5 483.4 622.4 484.5 625.2 485.9 627.9 487.7 630.6 489.7 633.1 491.8 635.4 493.8 637.3 495.8 639.1 497.8 640.9 499.7 642.8 501.6 644.8 503.5 644.8 503.5 643.6 501.1 642.3 498.7 640.9 496.4 639.3 494.1 637.2 491.9 634.8 489.8 632.2 487.6 629.4 485.5 626.5 483.7 623.4 482.1 620.3 480.9 617.1 480.0 613.8 479.4 610.3 479.1 606.8 479.1 603.1 479.6 599.4 480.6 595.7 482.0 592.2 483.7 588.7 485.4ZM636.3,531.2L634.5 532.5 632.8 533.7 631.0 535.1 629.3 536.6 627.8 538.4 626.4 540.6 625.3 542.9 624.2 545.2 623.1 547.6 621.8 549.9 620.4 552.3 618.8 554.7 617.2 557.1 615.4 559.4 613.4 561.7 611.3 563.8 608.9 566.0 606.4 568.0 603.8 569.9 601.0 571.5 597.9 572.7 594.6 573.7 591.1 574.8 587.6 576.0 584.2 577.4 584.2 577.4 587.8 577.0 591.5 576.7 595.2 576.1 598.8 575.1 602.1 573.7 605.1 572.0 608.0 570.0 610.6 567.9 613.0 565.6 615.3 563.4 617.4 561.0 619.2 558.6 620.9 556.1 622.5 553.6 624.0 551.2 625.3 548.8 626.5 546.3 627.6 544.0 628.7 541.8 629.8 539.8 631.0 538.0 632.3 536.3 633.6 534.6 635.0 532.9 636.3 531.2ZM639.7,518.7L641.4 519.9 643.2 520.4 645.0 520.7 646.6 521.0 647.8 521.4 648.8 521.9 649.6 522.6 650.3 523.3 650.8 524.1 651.1 524.7 651.2 525.1 651.3 525.5 651.4 526.2 651.5 527.1 651.8 528.0 651.8 528.0 652.4 527.3 653.0 526.7 653.5 526.0 653.7 524.9 653.5 523.8 652.9 522.8 652.2 521.8 651.3 520.8 650.2 519.9 648.8 519.1 647.2 518.6 645.4 518.2 643.6 517.9 641.7 518.0 639.7 518.7ZM752.9,325.2L751.3 327.7 749.7 330.2 748.2 332.6 746.6 335.3 745.0 338.3 743.3 341.5 741.6 345.1 739.8 348.7 738.0 352.5 736.4 356.4 734.8 360.2 733.3 364.1 731.9 368.2 730.5 372.2 729.2 376.3 727.9 380.5 726.8 384.8 725.7 389.1 724.7 393.4 723.8 397.6 723.0 401.7 722.3 405.7 721.8 409.7 721.3 413.7 720.8 417.7 720.8 417.7 721.7 413.7 722.4 409.8 723.2 405.9 724.0 401.9 724.8 397.8 725.7 393.7 726.7 389.4 727.8 385.1 728.9 380.8 730.1 376.6 731.4 372.5 732.8 368.5 734.3 364.5 735.8 360.6 737.3 356.7 739.0 352.9 740.7 349.2 742.5 345.5 744.2 342.0 745.8 338.7 747.4 335.7 748.8 333.0 750.2 330.4 751.5 327.8 752.9 325.2ZM778.3,432.6L777.3 434.3 776.7 436.2 776.2 438.1 775.7 439.9 775.1 441.7 774.5 443.3 773.8 444.9 773.1 446.5 772.5 448.1 772.1 449.8 772.1 449.8 773.2 448.4 774.1 447.0 774.8 445.4 775.5 443.8 776.1 442.1 776.7 440.3 777.3 438.4 777.8 436.5 778.2 434.6 778.3 432.6ZM785.5,449.1L784.0 450.9 782.7 452.9 781.6 454.9 780.4 456.9 779.2 458.9 777.9 460.7 776.6 462.6 775.2 464.4 774.0 466.4 772.9 468.5 772.9 468.5 774.6 466.9 776.1 465.1 777.5 463.2 778.8 461.4 780.1 459.4 781.3 457.5 782.5 455.4 783.7 453.4 784.7 451.3 785.5 449.1ZM774.8,459.1L772.3 461.7 770.0 464.5 767.7 467.3 765.5 470.0 763.2 472.6 760.9 475.1 758.5 477.4 756.1 479.6 753.7 481.9 751.6 484.4 751.6 484.4 754.2 482.4 756.7 480.3 759.2 478.1 761.6 475.8 764.0 473.3 766.3 470.7 768.5 467.9 770.8 465.1 772.9 462.2 774.8 459.1ZM743.5,435.2L742.7 436.3 742.1 437.4 741.5 438.6 741.0 439.7 740.4 440.8 739.8 441.9 739.1 443.0 738.4 444.0 737.8 445.1 737.4 446.4 737.4 446.4 738.4 445.6 739.2 444.6 740.0 443.5 740.7 442.4 741.3 441.3 741.9 440.2 742.5 439.0 743.0 437.8 743.4 436.6 743.5 435.2ZM752.9,404.7L752.9 406.1 753.2 407.5 753.6 408.9 754.1 410.2 754.6 411.5 755.2 412.7 755.8 413.8 756.5 414.8 757.3 415.8 758.2 416.6 758.2 416.6 757.9 415.4 757.3 414.3 756.7 413.3 756.0 412.2 755.5 411.1 755.0 409.9 754.6 408.6 754.2 407.3 753.7 405.9 752.9 404.7ZM748.9,395.4L748.7 397.1 748.9 398.8 749.1 400.4 749.4 402.0 749.7 403.5 750.2 404.8 750.8 405.9 751.3 406.9 752.1 407.8 752.9 408.7 752.9 408.7 752.6 407.5 752.2 406.4 751.6 405.4 751.1 404.4 750.7 403.2 750.4 401.8 750.1 400.3 749.9 398.6 749.6 396.9 748.9 395.4ZM658.2,518.7L661.9 517.9 665.5 517.2 669.1 516.4 672.8 515.4 676.6 514.2 680.7 512.8 685.0 511.4 689.3 509.8 693.8 508.1 698.1 506.2 702.5 504.1 706.8 501.8 711.2 499.4 715.5 496.9 719.6 494.2 723.6 491.3 727.5 488.2 731.2 484.9 734.8 481.5 738.4 478.0 738.4 478.0 734.3 480.8 730.3 483.8 726.4 486.8 722.6 489.8 718.6 492.7 714.5 495.3 710.3 497.9 706.0 500.3 701.6 502.5 697.4 504.6 693.1 506.4 688.7 508.1 684.4 509.7 680.1 511.1 676.1 512.5 672.2 513.7 668.6 514.9 665.1 516.1 661.7 517.3 658.2 518.7ZM669.7,508.0L672.9 506.7 676.0 505.1 679.0 503.3 682.0 501.5 684.7 499.8 687.2 498.0 689.6 496.1 691.8 494.3 693.9 492.4 695.9 490.2 695.9 490.2 693.3 491.7 691.0 493.4 688.8 495.2 686.5 497.0 684.0 498.8 681.3 500.5 678.4 502.3 675.4 504.0 672.4 505.9 669.7 508.0ZM692.4,516.0L695.7 515.0 699.0 513.9 702.2 512.6 705.4 511.3 708.7 509.9 711.9 508.4 715.1 506.9 718.4 505.3 721.6 503.6 724.7 501.9 727.8 500.0 730.8 498.0 733.6 495.8 736.4 493.6 739.2 491.3 739.2 491.3 736.1 493.1 733.0 495.0 730.1 497.1 727.2 499.0 724.2 500.9 721.1 502.7 717.9 504.3 714.7 505.9 711.4 507.4 708.2 508.9 705.0 510.3 701.8 511.6 698.6 512.9 695.5 514.4 692.4 516.0ZM621.6,533.3L622.1 534.3 622.9 535.2 623.7 536.0 624.6 536.7 625.6 537.0 626.5 536.7 627.3 536.0 627.9 535.2 628.5 534.3 628.8 533.3 628.8 533.3 627.9 533.8 627.1 534.6 626.5 535.3 626.0 535.8 625.6 536.0 625.1 535.8 624.4 535.3 623.6 534.5 622.7 533.7 621.6 533.3ZM773.5,308.2L773.6 308.9 773.8 309.7 774.1 310.5 774.7 311.1 775.5 311.4 776.5 311.3 777.5 311.0 778.4 310.4 779.3 309.8 780.1 309.1 780.6 308.3 780.9 307.4 781.1 306.5 781.1 305.6 781.0 304.7 781.0 304.7 780.4 305.5 780.0 306.3 779.8 307.1 779.5 307.8 779.2 308.3 778.6 308.9 777.8 309.4 777.0 309.9 776.2 310.2 775.7 310.2 775.4 310.1 775.1 309.8 774.7 309.2 774.1 308.6 773.5 308.2ZM764.9,334.0L764.0 335.3 763.4 336.7 762.8 338.2 762.4 339.6 762.2 341.1 762.4 342.6 762.7 343.9 763.2 345.2 763.8 346.4 764.7 347.5 764.7 347.5 764.6 346.1 764.2 344.8 763.8 343.6 763.4 342.4 763.3 341.1 763.5 339.9 763.9 338.5 764.4 337.1 764.9 335.6 764.9 334.0ZM748.1,380.5L747.4 382.0 747.0 383.6 746.7 385.2 746.5 386.8 746.5 388.5 746.6 390.1 746.9 391.7 747.3 393.4 747.8 394.9 748.6 396.4 748.6 396.4 748.7 394.7 748.4 393.1 748.0 391.5 747.7 390.0 747.6 388.4 747.6 386.9 747.8 385.3 748.1 383.7 748.2 382.1 748.1 380.5ZM819.0,254.1L818.4 255.7 817.9 257.3 817.3 258.9 816.8 260.5 816.3 262.1 815.8 263.7 815.4 265.3 814.9 267.0 814.5 268.5 813.9 270.0 813.3 271.4 812.5 272.8 811.7 274.2 810.8 275.6 809.9 277.0 809.0 278.4 808.0 279.8 807.0 281.2 806.0 282.6 804.9 284.1 803.7 285.5 802.5 286.9 801.3 288.3 800.0 289.8 798.8 291.2 797.6 292.6 796.3 294.0 795.1 295.3 793.9 296.8 792.6 298.4 791.3 300.1 789.9 302.0 788.6 303.9 787.2 305.8 785.9 307.7 784.5 309.4 783.1 311.2 781.6 313.0 780.3 315.0 779.1 317.1 778.3 319.5 777.9 322.0 777.7 324.5 777.6 327.0 777.5 329.5 777.5 329.5 778.3 327.1 779.1 324.7 779.8 322.4 780.6 320.2 781.4 318.1 782.4 316.3 783.6 314.5 785.0 312.8 786.5 311.0 787.9 309.1 789.3 307.2 790.6 305.3 792.0 303.5 793.3 301.6 794.6 299.9 795.8 298.4 797.0 297.0 798.2 295.6 799.4 294.2 800.7 292.8 801.9 291.4 803.2 290.0 804.4 288.5 805.7 287.1 806.8 285.6 808.0 284.2 809.0 282.7 810.1 281.2 811.1 279.8 812.0 278.3 813.0 276.9 813.9 275.5 814.7 274.0 815.5 272.5 816.2 271.0 816.8 269.3 817.4 267.6 817.8 265.9 818.1 264.2 818.4 262.5 818.6 260.8 818.7 259.2 818.8 257.5 818.9 255.8 819.0 254.1ZM823.8,273.6L823.2 274.5 822.5 275.5 821.9 276.4 821.3 277.4 820.6 278.4 820.0 279.3 819.4 280.2 818.7 281.2 818.0 282.2 817.3 283.2 816.5 284.4 815.6 285.7 814.7 286.9 813.7 288.2 812.8 289.3 811.9 290.4 811.0 291.4 810.0 292.3 809.1 293.3 808.2 294.4 807.2 295.6 806.3 296.9 805.4 298.1 804.4 299.4 803.5 300.6 802.7 301.8 801.8 302.9 801.0 304.0 800.1 305.3 798.9 306.8 797.4 308.6 795.7 310.7 793.8 313.0 792.1 315.1 790.7 317.0 789.7 318.5 789.0 319.6 788.4 320.7 788.0 322.0 787.5 323.8 787.1 326.2 786.7 329.0 786.3 332.1 786.0 335.1 785.8 337.9 785.6 340.5 785.5 343.0 785.5 345.4 785.4 347.7 785.3 350.0 785.3 352.1 785.3 354.1 785.4 356.1 785.5 358.0 785.6 360.0 785.6 360.0 786.0 358.1 786.4 356.1 786.7 354.2 787.0 352.2 787.3 350.0 787.4 347.8 787.5 345.5 787.5 343.1 787.6 340.6 787.8 338.1 788.0 335.3 788.3 332.3 788.7 329.3 789.0 326.5 789.5 324.2 789.9 322.6 790.3 321.5 790.7 320.6 791.4 319.6 792.3 318.2 793.7 316.4 795.4 314.2 797.2 312.0 799.0 309.9 800.5 308.0 801.7 306.5 802.6 305.2 803.5 304.1 804.3 303.0 805.1 301.8 806.1 300.6 807.0 299.3 807.9 298.1 808.8 296.9 809.7 295.7 810.6 294.7 811.5 293.7 812.4 292.7 813.4 291.7 814.3 290.6 815.3 289.4 816.3 288.1 817.2 286.8 818.1 285.6 819.0 284.4 819.7 283.3 820.3 282.2 820.9 281.1 821.4 280.1 821.8 279.0 822.3 277.9 822.7 276.8 823.1 275.7 823.4 274.7 823.8 273.6Z" fill="#fff"/><path d="M823.7,279.5L824.6 283.7 825.7 287.9 826.7 292.0 827.6 296.2 828.4 300.4 829.0 304.6 829.4 309.0 829.7 313.3 829.8 317.5 830.0 321.4 830.0 324.9 830.0 328.1 829.8 331.1 829.7 334.1 829.6 337.2 829.5 340.3 829.4 343.3 829.4 346.3 829.3 349.5 829.1 353.0 828.9 357.1 828.7 361.6 828.4 366.3 828.0 370.7 827.5 374.5 826.9 377.6 826.1 380.3 825.3 382.7 824.4 385.1 823.6 387.6 823.6 387.6 824.6 385.1 825.6 382.8 826.5 380.5 827.4 377.8 828.2 374.6 828.7 370.8 829.2 366.3 829.5 361.7 829.7 357.1 829.9 353.1 830.1 349.5 830.2 346.3 830.2 343.3 830.3 340.3 830.4 337.2 830.5 334.2 830.6 331.2 830.8 328.1 830.8 324.9 830.8 321.4 830.6 317.5 830.5 313.3 830.2 308.9 829.8 304.5 829.2 300.2 828.4 296.0 827.3 291.9 826.1 287.8 824.9 283.6 823.7 279.5ZM819.7,287.4L820.5 292.2 821.3 297.0 822.2 301.7 823.0 306.4 823.6 310.9 824.0 315.2 824.2 319.5 824.2 323.6 824.2 327.8 824.3 332.0 824.3 336.2 824.3 340.5 824.2 344.7 824.1 348.9 823.9 353.0 823.7 357.1 823.5 361.1 823.1 365.0 822.7 368.9 822.1 372.7 821.4 376.5 820.5 380.2 819.5 383.8 818.4 387.4 817.3 391.1 816.0 394.8 814.7 398.6 813.3 402.3 811.9 406.1 810.5 409.8 810.5 409.8 812.1 406.1 813.7 402.5 815.2 398.8 816.7 395.1 818.0 391.4 819.2 387.7 820.3 384.0 821.3 380.3 822.2 376.6 822.9 372.8 823.5 369.0 823.9 365.1 824.3 361.1 824.5 357.1 824.7 353.1 824.9 348.9 825.0 344.7 825.1 340.5 825.1 336.2 825.0 332.0 825.0 327.8 825.0 323.6 825.0 319.4 824.8 315.2 824.4 310.8 823.8 306.3 822.9 301.6 821.8 296.9 820.7 292.1 819.7 287.4ZM814.4,295.4L815.0 299.7 815.8 304.0 816.5 308.3 817.2 312.4 817.8 316.2 818.2 319.6 818.4 322.6 818.5 325.5 818.5 328.5 818.5 331.9 818.5 335.8 818.4 340.1 818.2 344.4 817.9 348.8 817.6 353.0 817.1 357.1 816.6 361.0 816.1 365.0 815.4 368.9 814.6 372.7 813.7 376.5 812.7 380.4 811.6 384.1 810.4 387.7 809.3 391.1 808.3 394.2 807.2 397.0 806.2 399.7 805.1 402.4 804.1 405.2 804.1 405.2 805.3 402.5 806.5 399.9 807.7 397.2 808.9 394.4 810.0 391.4 811.2 388.0 812.3 384.4 813.4 380.6 814.5 376.7 815.4 372.9 816.2 369.0 816.8 365.1 817.4 361.2 817.9 357.2 818.4 353.1 818.7 348.9 819.0 344.5 819.2 340.1 819.3 335.9 819.3 332.0 819.3 328.5 819.3 325.5 819.2 322.5 818.9 319.5 818.6 316.1 818.0 312.2 817.2 308.1 816.3 303.9 815.3 299.6 814.4 295.4ZM809.1,302.1L809.6 305.6 810.2 309.2 810.9 312.8 811.5 316.2 811.9 319.4 812.3 322.0 812.6 324.4 812.8 326.6 812.9 329.0 812.9 331.9 812.8 335.5 812.5 339.5 812.2 343.7 811.7 347.9 811.2 351.9 810.6 355.8 809.9 359.7 809.1 363.5 808.2 367.2 807.4 370.8 806.5 374.4 805.5 378.0 804.5 381.5 803.6 384.7 802.9 387.5 802.2 389.6 801.7 391.2 801.3 392.4 800.8 393.7 800.4 395.0 800.4 395.0 800.9 393.7 801.5 392.5 802.0 391.3 802.6 389.7 803.4 387.6 804.3 384.9 805.3 381.8 806.3 378.3 807.3 374.6 808.2 371.0 809.0 367.4 809.9 363.6 810.7 359.8 811.4 356.0 812.0 352.1 812.5 348.0 813.0 343.7 813.3 339.5 813.6 335.5 813.7 332.0 813.7 329.0 813.6 326.5 813.4 324.3 813.1 321.9 812.7 319.2 812.2 316.1 811.5 312.7 810.7 309.1 809.9 305.6 809.1 302.1ZM803.6,307.4L804.2 310.5 804.9 313.7 805.6 316.9 806.2 319.9 806.6 322.5 807.0 324.6 807.2 326.2 807.4 327.8 807.4 329.5 807.3 331.9 807.1 335.1 806.7 338.9 806.3 342.9 805.7 347.0 805.1 350.9 804.2 354.5 803.3 358.2 802.2 361.8 801.2 365.4 800.2 368.9 799.2 372.5 798.2 376.3 797.2 380.0 796.4 383.2 795.7 385.7 795.3 387.3 794.9 388.1 794.7 388.6 794.5 388.9 794.2 389.4 794.2 389.4 794.5 388.9 794.8 388.6 795.1 388.2 795.5 387.4 796.1 385.8 796.9 383.3 797.9 380.1 798.9 376.5 800.0 372.7 800.9 369.1 802.0 365.6 803.0 362.0 804.1 358.4 805.0 354.7 805.8 351.0 806.5 347.1 807.1 343.0 807.5 338.9 807.9 335.2 808.1 332.0 808.2 329.5 808.2 327.7 808.0 326.2 807.8 324.5 807.4 322.4 806.9 319.7 806.2 316.8 805.4 313.6 804.5 310.4 803.6 307.4ZM798.3,312.8L798.8 315.2 799.3 317.8 799.9 320.2 800.4 322.6 800.8 324.6 801.1 326.3 801.4 327.4 801.5 328.6 801.5 329.9 801.4 331.9 801.2 334.7 800.9 338.0 800.5 341.6 799.9 345.3 799.2 348.7 798.4 352.2 797.3 355.7 796.1 359.1 795.0 362.3 794.1 365.2 793.5 367.5 793.1 369.5 792.7 371.2 792.3 372.8 792.0 374.6 792.0 374.6 792.5 372.9 793.0 371.3 793.6 369.6 794.2 367.7 794.9 365.4 795.8 362.6 796.9 359.4 798.0 355.9 799.1 352.4 800.0 348.9 800.7 345.4 801.2 341.7 801.7 338.1 802.0 334.8 802.2 332.0 802.3 329.9 802.3 328.5 802.1 327.3 801.9 326.1 801.6 324.5 801.2 322.4 800.6 320.1 799.8 317.6 799.1 315.2 798.3 312.8ZM793.6,318.0L793.9 319.8 794.3 321.6 794.8 323.4 795.2 325.1 795.5 326.7 795.7 328.2 795.9 329.5 795.9 330.7 795.9 332.2 795.8 334.0 795.6 336.4 795.3 339.1 794.9 342.0 794.4 344.9 793.9 347.7 793.3 350.3 792.7 352.8 792.0 355.3 791.4 357.9 790.9 360.4 790.9 360.4 791.8 358.0 792.7 355.5 793.4 353.0 794.1 350.5 794.7 347.9 795.2 345.1 795.7 342.1 796.1 339.2 796.4 336.5 796.6 334.1 796.7 332.2 796.7 330.7 796.7 329.4 796.5 328.1 796.3 326.6 795.9 324.9 795.5 323.2 794.8 321.5 794.2 319.7 793.6 318.0Z" fill="#fff" fill-opacity="0.6"/><ellipse cx="760.4" cy="306.9" rx="2.8" ry="2.8" fill="#fff" transform="rotate(0 760.4 306.9)"/><ellipse cx="771.1" cy="340.6" rx="1.7" ry="3.2" fill="#fff" transform="rotate(25 771.1 340.6)"/><ellipse cx="728.8" cy="417.2" rx="1.1" ry="1.9" fill="#fff" transform="rotate(20 728.8 417.2)"/><ellipse cx="719.5" cy="451.7" rx="1.4" ry="2.1" fill="#fff" transform="rotate(10 719.5 451.7)"/><ellipse cx="726.2" cy="468.5" rx="1.1" ry="1.9" fill="#fff" transform="rotate(40 726.2 468.5)"/><ellipse cx="752.4" cy="356.0" rx="0.9" ry="1.5" fill="#fff" transform="rotate(60 752.4 356.0)"/><path d="M819.5 253.5h3M821 252v3" stroke="#e03030" stroke-width="0.5"/></svg><div class="a" style="left:478px;top:603.100px;width:461px;height:2.800px;background:#2e9cea;border-radius:1.4px"></div><div class="a" style="left:935.300px;top:600.400px;width:8.400px;height:8.400px;border-radius:50%;background:#38a8f8"></div><div class="t" style="left:946px;top:600.800px;font-size:8.200px;color:#f0f0f0">04.082</div><div class="t" style="left:478px;top:615px;font-size:8.300px;color:#f0f0f0">预览速度</div><div class="a" style="left:513px;top:617.900px;width:66px;height:2.200px;background:#2a2a2a;border-radius:1px"></div><div class="a" style="left:513px;top:617.600px;width:26px;height:2.800px;background:#2e9cea;border-radius:1.4px"></div><div class="a" style="left:534.800px;top:614.900px;width:8.400px;height:8.400px;border-radius:50%;background:#38a8f8"></div><div class="t" style="left:580.600px;top:616.300px;font-size:8.200px;color:#f0f0f0">x 1</div><div class="a" style="left:594.300px;top:615px;width:7.800px;height:7.800px;border:0.900px solid #2e8fd6;border-radius:1px"></div><div class="t" style="left:607.500px;top:615px;font-size:8.300px;color:#f0f0f0">显示空送轨迹</div><div class="t" style="left:478px;top:634.200px;font-size:8.200px;color:#f0f0f0">X:333.723 | Y:352.393</div><div class="btn" style="left:930px;top:626.800px;width:41px;height:20.200px;border-radius:1.500px;font-size:8.200px">确定</div></body></html>
